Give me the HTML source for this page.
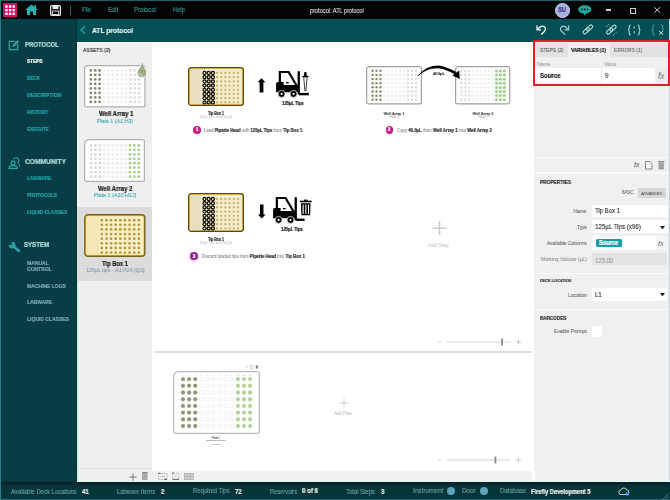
<!DOCTYPE html><html><head><meta charset="utf-8"><style>
html,body{margin:0;padding:0;}
body{width:670px;height:500px;position:relative;overflow:hidden;background:#efefef;font-family:"Liberation Sans",sans-serif;}
.t{position:absolute;white-space:nowrap;line-height:1;will-change:transform;-webkit-text-stroke:0.08px currentColor;}
.t b,.tb{-webkit-text-stroke:0.22px currentColor;}
.t b{color:#333;}
.r{position:absolute;}
svg{position:absolute;overflow:visible;}
</style></head><body>
<div class="r" style="left:0px;top:0px;width:670px;height:19px;background:#030404;"></div>
<div class="r" style="left:0px;top:0px;width:670px;height:1px;background:#1e5e6a;"></div>
<div class="r" style="left:0px;top:19px;width:77px;height:462px;background:#083d45;"></div>
<div class="r" style="left:77px;top:19px;width:593px;height:23px;background:#024f56;"></div>
<div class="r" style="left:77px;top:19px;width:593px;height:1px;background:#03554f;"></div>
<div class="r" style="left:74px;top:19px;width:2px;height:462px;background:#0a3b41;"></div>
<div class="r" style="left:75.5px;top:19px;width:1px;height:462px;background:#05333a;"></div>
<div class="r" style="left:77px;top:42px;width:75px;height:439px;background:#efefef;"></div>
<div class="r" style="left:152px;top:42px;width:382px;height:439px;background:#ffffff;"></div>
<div class="r" style="left:534px;top:42px;width:136px;height:439px;background:#f0f0f0;"></div>
<div class="r" style="left:77px;top:42px;width:593px;height:1px;background:#ffffff;"></div>
<div class="r" style="left:0px;top:481px;width:670px;height:19px;background:#033539;"></div>
<div class="r" style="left:77px;top:481px;width:593px;height:1px;background:#d8fff6;"></div>
<div class="r" style="left:0px;top:482px;width:670px;height:1.5px;background:#06222a;"></div>
<div class="r" style="left:0px;top:483.5px;width:670px;height:2px;background:#0c2c35;"></div>
<div class="r" style="left:0px;top:499px;width:670px;height:1px;background:#2a6b7a;"></div>
<div class="r" style="left:0px;top:0px;width:1px;height:500px;background:#2a7b88;"></div>
<div class="r" style="left:669px;top:19px;width:1px;height:462px;background:#b9d3df;"></div>
<svg style="left:3px;top:3px" width="14" height="14" viewBox="0 0 14 14"><rect x="0" y="0" width="14" height="14" fill="#cf106c"/><rect x="2.3" y="2.3" width="2.4" height="2.4" rx="0.5" fill="#fff"/><rect x="2.3" y="5.9" width="2.4" height="2.4" rx="0.5" fill="#fff"/><rect x="2.3" y="9.5" width="2.4" height="2.4" rx="0.5" fill="#fff"/><rect x="5.9" y="2.3" width="2.4" height="2.4" rx="0.5" fill="#fff"/><rect x="5.9" y="5.9" width="2.4" height="2.4" rx="0.5" fill="#fff"/><rect x="5.9" y="9.5" width="2.4" height="2.4" rx="0.5" fill="#fff"/><rect x="9.5" y="2.3" width="2.4" height="2.4" rx="0.5" fill="#fff"/><rect x="9.5" y="5.9" width="2.4" height="2.4" rx="0.5" fill="#fff"/><rect x="9.5" y="9.5" width="2.4" height="2.4" rx="0.5" fill="#fff"/></svg>
<svg style="left:25px;top:4px" width="13" height="11" viewBox="0 0 13 11"><path d="M6.5 0.5 L13 6 L11 6 L11 11 L8 11 L8 7.5 L5 7.5 L5 11 L2 11 L2 6 L0 6 Z" fill="#23b3b5"/><rect x="9.3" y="1" width="1.6" height="3" fill="#23b3b5"/></svg>
<svg style="left:50px;top:5px" width="11" height="11" viewBox="0 0 11 11"><rect x="0.6" y="0.6" width="9.8" height="9.8" rx="1" fill="none" stroke="#e8e8e8" stroke-width="1.2"/><rect x="2.5" y="0.6" width="6" height="3.5" fill="#e8e8e8"/><rect x="2.3" y="6" width="6.4" height="3.6" fill="none" stroke="#e8e8e8" stroke-width="0.9"/></svg>
<div class="r" style="left:70px;top:6px;width:1px;height:9px;background:#3a5a60;"></div>
<div class="t" style="left:82.00px;top:7.28px;font-size:6.27px;color:#3fa2a2;transform:scaleX(0.8929);transform-origin:left center;">File</div>
<div class="t" style="left:107.60px;top:7.16px;font-size:6.50px;color:#3fa2a2;transform:scaleX(0.8929);transform-origin:left center;">Edit</div>
<div class="t" style="left:134.00px;top:7.04px;font-size:6.72px;color:#3fa2a2;transform:scaleX(0.8929);transform-origin:left center;">Protocol</div>
<div class="t" style="left:173.00px;top:7.16px;font-size:6.50px;color:#3fa2a2;transform:scaleX(0.8929);transform-origin:left center;">Help</div>
<div class="t" style="left:309.50px;top:7.98px;font-size:6.27px;color:#e0e0e0;transform:scaleX(0.8929);transform-origin:left center;">protocol: ATL protocol</div>
<div class="r" style="left:554.7px;top:2.6px;width:13.6px;height:13.6px;border-radius:50%;background:#a9aee0;border:0.5px solid #cfd0f2;"></div>
<div class="t" style="left:361.75px;width:400px;text-align:center;top:7.38px;font-size:6.27px;color:#2c3a78;transform:scaleX(0.8929);transform-origin:center center;font-weight:bold;-webkit-text-stroke:0.22px currentColor;">SU</div>
<svg style="left:578.3px;top:5.3px" width="15" height="12" viewBox="0 0 15 12"><ellipse cx="6.7" cy="4.4" rx="6.6" ry="4.1" fill="#1ea9a0"/><path d="M5.5 7.8 L6.2 10.5 L9 7.8 Z" fill="#1ea9a0"/><circle cx="3.9" cy="4.4" r="0.85" fill="#030607"/><circle cx="6.7" cy="4.4" r="0.85" fill="#030607"/><circle cx="9.5" cy="4.4" r="0.85" fill="#030607"/></svg>
<div class="r" style="left:605.7px;top:9.4px;width:5.8px;height:1.2px;background:#d0d0d0;"></div>
<svg style="left:630px;top:7.5px" width="6" height="6" viewBox="0 0 6 6"><rect x="0.5" y="0.5" width="5" height="5" fill="none" stroke="#cfcfcf" stroke-width="1"/></svg>
<svg style="left:654.2px;top:7.2px" width="6.5" height="6" viewBox="0 0 6.5 6"><path d="M0.3 0.2 L6.2 5.8 M6.2 0.2 L0.3 5.8" stroke="#d0d0d0" stroke-width="1"/></svg>
<svg style="left:80px;top:26px" width="6" height="8" viewBox="0 0 6 8"><path d="M5 0.5 L1 4 L5 7.5" fill="none" stroke="#2aa2a6" stroke-width="1.3"/></svg>
<div class="t" style="left:91.50px;top:26.91px;font-size:7.50px;color:#e8f4f4;transform:scaleX(0.8929);transform-origin:left center;font-weight:bold;-webkit-text-stroke:0.22px currentColor;">ATL protocol</div>
<svg style="left:532px;top:22px" width="40" height="16" viewBox="0 0 40 16"><path d="M5 3.5 V7.8 H9.2" fill="none" stroke="#f4fbfa" stroke-width="1.3"/><path d="M5.8 7.3 Q9 3 12 4.6 Q14.6 6.6 12.5 9.2 L9.2 12.6" fill="none" stroke="#f4fbfa" stroke-width="1.3"/><path d="M36.7 3.6 V7.8 H32.6" fill="none" stroke="#a9d2d0" stroke-width="1.2"/><path d="M36 7.3 Q32.8 3 29.8 4.6 Q27.3 6.6 29.4 9.2 L33.2 12.6" fill="none" stroke="#a9d2d0" stroke-width="1.2"/></svg>
<svg style="left:578px;top:22px" width="44" height="16" viewBox="0 0 44 16"><g transform="translate(9.9 7.4) rotate(-42)"><g transform="translate(-2.2 0)"><rect x="-3.6" y="-1.7" width="7.2" height="3.4" rx="1.7" fill="none" stroke="#b8e0dc" stroke-width="1.1"/></g><g transform="translate(2.2 0)"><rect x="-3.6" y="-1.7" width="7.2" height="3.4" rx="1.7" fill="none" stroke="#b8e0dc" stroke-width="1.1"/></g></g><g transform="translate(33.3 7.6) rotate(-42)"><g transform="translate(-2.2 0)"><rect x="-3.6" y="-1.7" width="7.2" height="3.4" rx="1.7" fill="none" stroke="#b8e0dc" stroke-width="1.1"/></g><g transform="translate(2.2 0)"><rect x="-3.6" y="-1.7" width="7.2" height="3.4" rx="1.7" fill="none" stroke="#b8e0dc" stroke-width="1.1"/></g></g><path d="M29 3.2 L30 4.2 M28 4.8 H29.2 M30.6 2 V3.2 M36 11 L37 12 M37.6 10.2 H38.8 M35.6 12.6 V13.8" stroke="#b8e0dc" stroke-width="0.6"/></svg>
<svg style="left:624px;top:22px" width="46" height="16" viewBox="0 0 46 16"><path d="M6.8 3 Q5.2 3 5.2 4.6 V6.6 Q5.2 7.9 4 8 Q5.2 8.1 5.2 9.4 V11.4 Q5.2 13 6.8 13" fill="none" stroke="#a8d6d0" stroke-width="1.1"/><path d="M13.6 3 Q15.2 3 15.2 4.6 V6.6 Q15.2 7.9 16.4 8 Q15.2 8.1 15.2 9.4 V11.4 Q15.2 13 13.6 13" fill="none" stroke="#a8d6d0" stroke-width="1.1"/><path d="M10.2 4.6 V6.6 M10.2 9.2 V11.4" stroke="#a8d6d0" stroke-width="1.1"/><path d="M30.6 3 Q29 3 29 4.6 V6.6 Q29 7.9 27.8 8 Q29 8.1 29 9.4 V11.4 Q29 13 30.6 13" fill="none" stroke="#4f9692" stroke-width="1.1"/><path d="M37 3 Q38.6 3 38.6 4.6 V6.6 Q38.6 7.9 39.8 8" fill="none" stroke="#4f9692" stroke-width="1.1"/><path d="M35.2 9 L39.2 12.6 M39.2 9 L35.2 12.6" stroke="#cfe6e4" stroke-width="1"/></svg>
<div class="t" style="left:24.60px;top:41.54px;font-size:6.72px;color:#a6e0da;transform:scaleX(0.8929);transform-origin:left center;font-weight:bold;-webkit-text-stroke:0.22px currentColor;">PROTOCOL</div>
<div class="t" style="left:26.80px;top:59.00px;font-size:5.73px;color:#ffffff;transform:scaleX(0.8197);transform-origin:left center;font-weight:bold;-webkit-text-stroke:0.22px currentColor;">STEPS</div>
<div class="t" style="left:26.80px;top:75.76px;font-size:5.61px;color:#1fa4a8;transform:scaleX(0.8197);transform-origin:left center;font-weight:bold;-webkit-text-stroke:0.22px currentColor;">DECK</div>
<div class="t" style="left:26.80px;top:92.40px;font-size:6.10px;color:#1fa4a8;transform:scaleX(0.8197);transform-origin:left center;font-weight:bold;-webkit-text-stroke:0.22px currentColor;">DESCRIPTION</div>
<div class="t" style="left:26.80px;top:109.47px;font-size:5.98px;color:#1fa4a8;transform:scaleX(0.8197);transform-origin:left center;font-weight:bold;-webkit-text-stroke:0.22px currentColor;">HISTORY</div>
<div class="t" style="left:26.80px;top:126.76px;font-size:5.61px;color:#1fa4a8;transform:scaleX(0.8197);transform-origin:left center;font-weight:bold;-webkit-text-stroke:0.22px currentColor;">EXECUTE</div>
<svg style="left:8px;top:39px" width="12" height="12" viewBox="0 0 12 12"><path d="M7.2 2.4 H1.4 V10.6 H9.6 V5.2" fill="none" stroke="#2aa6a0" stroke-width="1.25"/><path d="M4.2 8.1 L5 5.6 L9.6 1.2 L11.2 2.8 L6.7 7.3 Z" fill="#2aa6a0"/></svg>
<div class="t" style="left:24.80px;top:157.84px;font-size:7.45px;color:#a6e0da;transform:scaleX(0.8929);transform-origin:left center;font-weight:bold;-webkit-text-stroke:0.22px currentColor;">COMMUNITY</div>
<div class="t" style="left:27.20px;top:176.33px;font-size:5.86px;color:#1fa4a8;transform:scaleX(0.8197);transform-origin:left center;font-weight:bold;-webkit-text-stroke:0.22px currentColor;">LABWARE</div>
<div class="t" style="left:27.20px;top:193.16px;font-size:5.79px;color:#1fa4a8;transform:scaleX(0.8197);transform-origin:left center;font-weight:bold;-webkit-text-stroke:0.22px currentColor;">PROTOCOLS</div>
<div class="t" style="left:27.20px;top:209.93px;font-size:5.86px;color:#1fa4a8;transform:scaleX(0.8197);transform-origin:left center;font-weight:bold;-webkit-text-stroke:0.22px currentColor;">LIQUID CLASSES</div>
<svg style="left:7.5px;top:156px" width="13" height="13" viewBox="0 0 13 13"><circle cx="5.1" cy="6.9" r="2.1" fill="none" stroke="#2aa6a0" stroke-width="1.15"/><path d="M0.9 12.4 L1.4 10.7 Q2.4 9.6 5.1 9.6 Q7.8 9.6 8.8 10.7 L9.3 12.4 Z" fill="none" stroke="#2aa6a0" stroke-width="1.15" stroke-linejoin="round"/><path d="M5.2 3.2 Q7 1.2 9.2 2 Q11.2 3 10.8 5.4 Q10.5 6.7 9.4 7.2" fill="none" stroke="#2aa6a0" stroke-width="1.1"/><path d="M10.6 7.8 Q11.8 8.8 11.6 10.6" fill="none" stroke="#2aa6a0" stroke-width="1.1"/></svg>
<div class="t" style="left:24.00px;top:241.78px;font-size:6.83px;color:#a6e0da;transform:scaleX(0.8929);transform-origin:left center;font-weight:bold;-webkit-text-stroke:0.22px currentColor;">SYSTEM</div>
<div class="t" style="left:27.00px;top:260.00px;font-size:6.10px;color:#79aab3;transform:scaleX(0.8197);transform-origin:left center;font-weight:bold;-webkit-text-stroke:0.22px currentColor;">MANUAL</div>
<div class="t" style="left:27.00px;top:265.60px;font-size:6.10px;color:#79aab3;transform:scaleX(0.8197);transform-origin:left center;font-weight:bold;-webkit-text-stroke:0.22px currentColor;">CONTROL</div>
<div class="t" style="left:27.00px;top:282.60px;font-size:6.10px;color:#79aab3;transform:scaleX(0.8197);transform-origin:left center;font-weight:bold;-webkit-text-stroke:0.22px currentColor;">MACHINE LOGS</div>
<div class="t" style="left:27.00px;top:299.20px;font-size:6.10px;color:#79aab3;transform:scaleX(0.8197);transform-origin:left center;font-weight:bold;-webkit-text-stroke:0.22px currentColor;">LABWARE</div>
<div class="t" style="left:27.00px;top:316.00px;font-size:6.10px;color:#79aab3;transform:scaleX(0.8197);transform-origin:left center;font-weight:bold;-webkit-text-stroke:0.22px currentColor;">LIQUID CLASSES</div>
<svg style="left:7px;top:240px" width="14" height="13" viewBox="0 0 14 13"><path d="M4.81 2.81 A2.4 2.4 0 1 1 2.81 4.81" fill="none" stroke="#2aa6aa" stroke-width="2"/><path d="M5.3 5.3 L12 11" stroke="#2aa6aa" stroke-width="2.3" stroke-linecap="round"/></svg>
<div class="r" style="left:77px;top:42px;width:1px;height:439px;background:#f4fffd;"></div>
<div class="r" style="left:77px;top:255px;width:1px;height:226px;background:#b8f0e2;"></div>
<div class="t" style="left:83.20px;top:48.15px;font-size:5.60px;color:#333333;transform:scaleX(0.8929);transform-origin:left center;-webkit-text-stroke:0.18px #333;">ASSETS (<i>3</i>)</div>
<svg style="left:84px;top:65px" width="62" height="43" viewBox="0 0 62 43"><path d="M4.1 0.6 L58.9 0.6 Q60.9 0.6 60.9 2.6 L60.9 39.9 Q60.9 41.9 58.9 41.9 L2.6 41.9 Q0.6 41.9 0.6 39.9 L0.6 4.1 Q0.6 0.6 4.1 0.6 Z" fill="#fff" stroke="#b0b0b0" stroke-width="1.2"/><circle cx="6.80" cy="5.40" r="1.4" fill="#818c72"/><circle cx="6.80" cy="9.90" r="1.4" fill="#818c72"/><circle cx="6.80" cy="14.40" r="1.4" fill="#818c72"/><circle cx="6.80" cy="18.90" r="1.4" fill="#818c72"/><circle cx="6.80" cy="23.40" r="1.4" fill="#818c72"/><circle cx="6.80" cy="27.90" r="1.4" fill="#818c72"/><circle cx="6.80" cy="32.40" r="1.4" fill="#818c72"/><circle cx="6.80" cy="36.90" r="1.4" fill="#818c72"/><circle cx="11.20" cy="5.40" r="1.4" fill="#818c72"/><circle cx="11.20" cy="9.90" r="1.4" fill="#818c72"/><circle cx="11.20" cy="14.40" r="1.4" fill="#818c72"/><circle cx="11.20" cy="18.90" r="1.4" fill="#818c72"/><circle cx="11.20" cy="23.40" r="1.4" fill="#818c72"/><circle cx="11.20" cy="27.90" r="1.4" fill="#818c72"/><circle cx="11.20" cy="32.40" r="1.4" fill="#818c72"/><circle cx="11.20" cy="36.90" r="1.4" fill="#818c72"/><circle cx="15.60" cy="5.40" r="1.4" fill="#818c72"/><circle cx="15.60" cy="9.90" r="1.4" fill="#818c72"/><circle cx="15.60" cy="14.40" r="1.4" fill="#818c72"/><circle cx="15.60" cy="18.90" r="1.4" fill="#818c72"/><circle cx="15.60" cy="23.40" r="1.4" fill="#818c72"/><circle cx="15.60" cy="27.90" r="1.4" fill="#818c72"/><circle cx="15.60" cy="32.40" r="1.4" fill="#818c72"/><circle cx="15.60" cy="36.90" r="1.4" fill="#818c72"/><circle cx="20.00" cy="5.40" r="1.4" fill="#efefef"/><circle cx="20.00" cy="9.90" r="1.4" fill="#efefef"/><circle cx="20.00" cy="14.40" r="1.4" fill="#efefef"/><circle cx="20.00" cy="18.90" r="1.4" fill="#efefef"/><circle cx="20.00" cy="23.40" r="1.4" fill="#efefef"/><circle cx="20.00" cy="27.90" r="1.4" fill="#efefef"/><circle cx="20.00" cy="32.40" r="1.4" fill="#efefef"/><circle cx="20.00" cy="36.90" r="1.4" fill="#efefef"/><circle cx="24.40" cy="5.40" r="1.4" fill="#efefef"/><circle cx="24.40" cy="9.90" r="1.4" fill="#efefef"/><circle cx="24.40" cy="14.40" r="1.4" fill="#efefef"/><circle cx="24.40" cy="18.90" r="1.4" fill="#efefef"/><circle cx="24.40" cy="23.40" r="1.4" fill="#efefef"/><circle cx="24.40" cy="27.90" r="1.4" fill="#efefef"/><circle cx="24.40" cy="32.40" r="1.4" fill="#efefef"/><circle cx="24.40" cy="36.90" r="1.4" fill="#efefef"/><circle cx="28.80" cy="5.40" r="1.4" fill="#efefef"/><circle cx="28.80" cy="9.90" r="1.4" fill="#efefef"/><circle cx="28.80" cy="14.40" r="1.4" fill="#efefef"/><circle cx="28.80" cy="18.90" r="1.4" fill="#efefef"/><circle cx="28.80" cy="23.40" r="1.4" fill="#efefef"/><circle cx="28.80" cy="27.90" r="1.4" fill="#efefef"/><circle cx="28.80" cy="32.40" r="1.4" fill="#efefef"/><circle cx="28.80" cy="36.90" r="1.4" fill="#efefef"/><circle cx="33.20" cy="5.40" r="1.4" fill="#efefef"/><circle cx="33.20" cy="9.90" r="1.4" fill="#efefef"/><circle cx="33.20" cy="14.40" r="1.4" fill="#efefef"/><circle cx="33.20" cy="18.90" r="1.4" fill="#efefef"/><circle cx="33.20" cy="23.40" r="1.4" fill="#efefef"/><circle cx="33.20" cy="27.90" r="1.4" fill="#efefef"/><circle cx="33.20" cy="32.40" r="1.4" fill="#efefef"/><circle cx="33.20" cy="36.90" r="1.4" fill="#efefef"/><circle cx="37.60" cy="5.40" r="1.4" fill="#efefef"/><circle cx="37.60" cy="9.90" r="1.4" fill="#efefef"/><circle cx="37.60" cy="14.40" r="1.4" fill="#efefef"/><circle cx="37.60" cy="18.90" r="1.4" fill="#efefef"/><circle cx="37.60" cy="23.40" r="1.4" fill="#efefef"/><circle cx="37.60" cy="27.90" r="1.4" fill="#efefef"/><circle cx="37.60" cy="32.40" r="1.4" fill="#efefef"/><circle cx="37.60" cy="36.90" r="1.4" fill="#efefef"/><circle cx="42.00" cy="5.40" r="1.4" fill="#efefef"/><circle cx="42.00" cy="9.90" r="1.4" fill="#efefef"/><circle cx="42.00" cy="14.40" r="1.4" fill="#efefef"/><circle cx="42.00" cy="18.90" r="1.4" fill="#efefef"/><circle cx="42.00" cy="23.40" r="1.4" fill="#efefef"/><circle cx="42.00" cy="27.90" r="1.4" fill="#efefef"/><circle cx="42.00" cy="32.40" r="1.4" fill="#efefef"/><circle cx="42.00" cy="36.90" r="1.4" fill="#efefef"/><circle cx="46.40" cy="5.40" r="1.4" fill="#dedede"/><circle cx="46.40" cy="9.90" r="1.4" fill="#dedede"/><circle cx="46.40" cy="14.40" r="1.4" fill="#dedede"/><circle cx="46.40" cy="18.90" r="1.4" fill="#dedede"/><circle cx="46.40" cy="23.40" r="1.4" fill="#dedede"/><circle cx="46.40" cy="27.90" r="1.4" fill="#dedede"/><circle cx="46.40" cy="32.40" r="1.4" fill="#dedede"/><circle cx="46.40" cy="36.90" r="1.4" fill="#dedede"/><circle cx="50.80" cy="5.40" r="1.4" fill="#dedede"/><circle cx="50.80" cy="9.90" r="1.4" fill="#dedede"/><circle cx="50.80" cy="14.40" r="1.4" fill="#dedede"/><circle cx="50.80" cy="18.90" r="1.4" fill="#dedede"/><circle cx="50.80" cy="23.40" r="1.4" fill="#dedede"/><circle cx="50.80" cy="27.90" r="1.4" fill="#dedede"/><circle cx="50.80" cy="32.40" r="1.4" fill="#dedede"/><circle cx="50.80" cy="36.90" r="1.4" fill="#dedede"/><circle cx="55.20" cy="5.40" r="1.4" fill="#dedede"/><circle cx="55.20" cy="9.90" r="1.4" fill="#dedede"/><circle cx="55.20" cy="14.40" r="1.4" fill="#dedede"/><circle cx="55.20" cy="18.90" r="1.4" fill="#dedede"/><circle cx="55.20" cy="23.40" r="1.4" fill="#dedede"/><circle cx="55.20" cy="27.90" r="1.4" fill="#dedede"/><circle cx="55.20" cy="32.40" r="1.4" fill="#dedede"/><circle cx="55.20" cy="36.90" r="1.4" fill="#dedede"/></svg>
<svg style="left:135.5px;top:60.8px" width="13" height="18" viewBox="0 0 13 18"><path d="M6 1.2 Q6.6 4.2 10.2 9.6 A4.75 4.75 0 1 1 1.8 9.6 Q5.4 4.2 6 1.2 Z" fill="#9bab84" stroke="#fbfbf6" stroke-width="1"/><path d="M6 1.6 Q6.4 3.6 7.6 5.6" fill="none" stroke="#6f7c66" stroke-width="0.7"/><path d="M3.4 12.2 Q4.4 14.2 6.8 14.3" fill="none" stroke="#eef3e6" stroke-width="0.8"/></svg>
<div class="t" style="left:98.50px;top:111.24px;font-size:6.72px;color:#1e1e1e;transform:scaleX(0.8929);transform-origin:left center;font-weight:bold;-webkit-text-stroke:0.22px currentColor;">Well Array 1</div>
<div class="t" style="left:97.30px;top:118.69px;font-size:5.90px;color:#30a5ad;transform:scaleX(0.8929);transform-origin:left center;">Plate 1 (<i>A1:H3</i>)</div>
<svg style="left:84px;top:138.5px" width="61" height="43.5" viewBox="0 0 61 43.5"><path d="M5.6 0.6 L58.4 0.6 Q60.4 0.6 60.4 2.6 L60.4 40.4 Q60.4 42.4 58.4 42.4 L2.6 42.4 Q0.6 42.4 0.6 40.4 L0.6 5.6 Q0.6 0.6 5.6 0.6 Z" fill="#fff" stroke="#b0b0b0" stroke-width="1.2"/><circle cx="7.20" cy="6.40" r="1.4" fill="#d9d9d9"/><circle cx="7.20" cy="10.86" r="1.4" fill="#d9d9d9"/><circle cx="7.20" cy="15.32" r="1.4" fill="#d9d9d9"/><circle cx="7.20" cy="19.78" r="1.4" fill="#d9d9d9"/><circle cx="7.20" cy="24.24" r="1.4" fill="#d9d9d9"/><circle cx="7.20" cy="28.70" r="1.4" fill="#d9d9d9"/><circle cx="7.20" cy="33.16" r="1.4" fill="#d9d9d9"/><circle cx="7.20" cy="37.62" r="1.4" fill="#d9d9d9"/><circle cx="11.52" cy="6.40" r="1.4" fill="#d9d9d9"/><circle cx="11.52" cy="10.86" r="1.4" fill="#d9d9d9"/><circle cx="11.52" cy="15.32" r="1.4" fill="#d9d9d9"/><circle cx="11.52" cy="19.78" r="1.4" fill="#d9d9d9"/><circle cx="11.52" cy="24.24" r="1.4" fill="#d9d9d9"/><circle cx="11.52" cy="28.70" r="1.4" fill="#d9d9d9"/><circle cx="11.52" cy="33.16" r="1.4" fill="#d9d9d9"/><circle cx="11.52" cy="37.62" r="1.4" fill="#d9d9d9"/><circle cx="15.84" cy="6.40" r="1.4" fill="#d9d9d9"/><circle cx="15.84" cy="10.86" r="1.4" fill="#d9d9d9"/><circle cx="15.84" cy="15.32" r="1.4" fill="#d9d9d9"/><circle cx="15.84" cy="19.78" r="1.4" fill="#d9d9d9"/><circle cx="15.84" cy="24.24" r="1.4" fill="#d9d9d9"/><circle cx="15.84" cy="28.70" r="1.4" fill="#d9d9d9"/><circle cx="15.84" cy="33.16" r="1.4" fill="#d9d9d9"/><circle cx="15.84" cy="37.62" r="1.4" fill="#d9d9d9"/><circle cx="20.16" cy="6.40" r="1.4" fill="#ececec"/><circle cx="20.16" cy="10.86" r="1.4" fill="#ececec"/><circle cx="20.16" cy="15.32" r="1.4" fill="#ececec"/><circle cx="20.16" cy="19.78" r="1.4" fill="#ececec"/><circle cx="20.16" cy="24.24" r="1.4" fill="#ececec"/><circle cx="20.16" cy="28.70" r="1.4" fill="#ececec"/><circle cx="20.16" cy="33.16" r="1.4" fill="#ececec"/><circle cx="20.16" cy="37.62" r="1.4" fill="#ececec"/><circle cx="24.48" cy="6.40" r="1.4" fill="#ececec"/><circle cx="24.48" cy="10.86" r="1.4" fill="#ececec"/><circle cx="24.48" cy="15.32" r="1.4" fill="#ececec"/><circle cx="24.48" cy="19.78" r="1.4" fill="#ececec"/><circle cx="24.48" cy="24.24" r="1.4" fill="#ececec"/><circle cx="24.48" cy="28.70" r="1.4" fill="#ececec"/><circle cx="24.48" cy="33.16" r="1.4" fill="#ececec"/><circle cx="24.48" cy="37.62" r="1.4" fill="#ececec"/><circle cx="28.80" cy="6.40" r="1.4" fill="#ececec"/><circle cx="28.80" cy="10.86" r="1.4" fill="#ececec"/><circle cx="28.80" cy="15.32" r="1.4" fill="#ececec"/><circle cx="28.80" cy="19.78" r="1.4" fill="#ececec"/><circle cx="28.80" cy="24.24" r="1.4" fill="#ececec"/><circle cx="28.80" cy="28.70" r="1.4" fill="#ececec"/><circle cx="28.80" cy="33.16" r="1.4" fill="#ececec"/><circle cx="28.80" cy="37.62" r="1.4" fill="#ececec"/><circle cx="33.12" cy="6.40" r="1.4" fill="#ececec"/><circle cx="33.12" cy="10.86" r="1.4" fill="#ececec"/><circle cx="33.12" cy="15.32" r="1.4" fill="#ececec"/><circle cx="33.12" cy="19.78" r="1.4" fill="#ececec"/><circle cx="33.12" cy="24.24" r="1.4" fill="#ececec"/><circle cx="33.12" cy="28.70" r="1.4" fill="#ececec"/><circle cx="33.12" cy="33.16" r="1.4" fill="#ececec"/><circle cx="33.12" cy="37.62" r="1.4" fill="#ececec"/><circle cx="37.44" cy="6.40" r="1.4" fill="#ececec"/><circle cx="37.44" cy="10.86" r="1.4" fill="#ececec"/><circle cx="37.44" cy="15.32" r="1.4" fill="#ececec"/><circle cx="37.44" cy="19.78" r="1.4" fill="#ececec"/><circle cx="37.44" cy="24.24" r="1.4" fill="#ececec"/><circle cx="37.44" cy="28.70" r="1.4" fill="#ececec"/><circle cx="37.44" cy="33.16" r="1.4" fill="#ececec"/><circle cx="37.44" cy="37.62" r="1.4" fill="#ececec"/><circle cx="41.76" cy="6.40" r="1.4" fill="#ececec"/><circle cx="41.76" cy="10.86" r="1.4" fill="#ececec"/><circle cx="41.76" cy="15.32" r="1.4" fill="#ececec"/><circle cx="41.76" cy="19.78" r="1.4" fill="#ececec"/><circle cx="41.76" cy="24.24" r="1.4" fill="#ececec"/><circle cx="41.76" cy="28.70" r="1.4" fill="#ececec"/><circle cx="41.76" cy="33.16" r="1.4" fill="#ececec"/><circle cx="41.76" cy="37.62" r="1.4" fill="#ececec"/><circle cx="46.08" cy="6.40" r="1.4" fill="#a7cf8a"/><circle cx="46.08" cy="10.86" r="1.4" fill="#a7cf8a"/><circle cx="46.08" cy="15.32" r="1.4" fill="#a7cf8a"/><circle cx="46.08" cy="19.78" r="1.4" fill="#a7cf8a"/><circle cx="46.08" cy="24.24" r="1.4" fill="#a7cf8a"/><circle cx="46.08" cy="28.70" r="1.4" fill="#a7cf8a"/><circle cx="46.08" cy="33.16" r="1.4" fill="#a7cf8a"/><circle cx="46.08" cy="37.62" r="1.4" fill="#a7cf8a"/><circle cx="50.40" cy="6.40" r="1.4" fill="#a7cf8a"/><circle cx="50.40" cy="10.86" r="1.4" fill="#a7cf8a"/><circle cx="50.40" cy="15.32" r="1.4" fill="#a7cf8a"/><circle cx="50.40" cy="19.78" r="1.4" fill="#a7cf8a"/><circle cx="50.40" cy="24.24" r="1.4" fill="#a7cf8a"/><circle cx="50.40" cy="28.70" r="1.4" fill="#a7cf8a"/><circle cx="50.40" cy="33.16" r="1.4" fill="#a7cf8a"/><circle cx="50.40" cy="37.62" r="1.4" fill="#a7cf8a"/><circle cx="54.72" cy="6.40" r="1.4" fill="#a7cf8a"/><circle cx="54.72" cy="10.86" r="1.4" fill="#a7cf8a"/><circle cx="54.72" cy="15.32" r="1.4" fill="#a7cf8a"/><circle cx="54.72" cy="19.78" r="1.4" fill="#a7cf8a"/><circle cx="54.72" cy="24.24" r="1.4" fill="#a7cf8a"/><circle cx="54.72" cy="28.70" r="1.4" fill="#a7cf8a"/><circle cx="54.72" cy="33.16" r="1.4" fill="#a7cf8a"/><circle cx="54.72" cy="37.62" r="1.4" fill="#a7cf8a"/></svg>
<div class="t" style="left:97.60px;top:185.94px;font-size:6.72px;color:#1e1e1e;transform:scaleX(0.8929);transform-origin:left center;font-weight:bold;-webkit-text-stroke:0.22px currentColor;">Well Array 2</div>
<div class="t" style="left:93.60px;top:193.35px;font-size:5.97px;color:#30a5ad;transform:scaleX(0.8929);transform-origin:left center;">Plate 1 (<i>A10:H12</i>)</div>
<div class="r" style="left:77px;top:206.5px;width:75px;height:74px;background:#dcdcdc;"></div>
<svg style="left:84px;top:214px" width="62" height="43" viewBox="0 0 62 43"><rect x="0.8" y="0.8" width="60" height="41.5" rx="3" fill="#f4c955" stroke="#76661c" stroke-width="1.4"/><rect x="2.3" y="2.3" width="57" height="38.5" rx="1.5" fill="#fbf0c4"/><path d="M3.0 3 V40" stroke="#f1dfa6" stroke-width="0.4"/><path d="M4.5 3 V40" stroke="#f1dfa6" stroke-width="0.4"/><path d="M6.0 3 V40" stroke="#f1dfa6" stroke-width="0.4"/><path d="M7.5 3 V40" stroke="#f1dfa6" stroke-width="0.4"/><path d="M9.0 3 V40" stroke="#f1dfa6" stroke-width="0.4"/><path d="M10.5 3 V40" stroke="#f1dfa6" stroke-width="0.4"/><path d="M12.0 3 V40" stroke="#f1dfa6" stroke-width="0.4"/><path d="M13.5 3 V40" stroke="#f1dfa6" stroke-width="0.4"/><path d="M15.0 3 V40" stroke="#f1dfa6" stroke-width="0.4"/><path d="M3 3.0 H15" stroke="#f1dfa6" stroke-width="0.4"/><path d="M3 4.5 H15" stroke="#f1dfa6" stroke-width="0.4"/><path d="M3 6.0 H15" stroke="#f1dfa6" stroke-width="0.4"/><path d="M3 7.5 H15" stroke="#f1dfa6" stroke-width="0.4"/><path d="M3 9.0 H15" stroke="#f1dfa6" stroke-width="0.4"/><path d="M3 10.5 H15" stroke="#f1dfa6" stroke-width="0.4"/><path d="M3 12.0 H15" stroke="#f1dfa6" stroke-width="0.4"/><path d="M3 13.5 H15" stroke="#f1dfa6" stroke-width="0.4"/><path d="M3 15.0 H15" stroke="#f1dfa6" stroke-width="0.4"/><path d="M3 16.5 H15" stroke="#f1dfa6" stroke-width="0.4"/><path d="M3 18.0 H15" stroke="#f1dfa6" stroke-width="0.4"/><path d="M3 19.5 H15" stroke="#f1dfa6" stroke-width="0.4"/><path d="M3 21.0 H15" stroke="#f1dfa6" stroke-width="0.4"/><path d="M3 22.5 H15" stroke="#f1dfa6" stroke-width="0.4"/><path d="M3 24.0 H15" stroke="#f1dfa6" stroke-width="0.4"/><path d="M3 25.5 H15" stroke="#f1dfa6" stroke-width="0.4"/><path d="M3 27.0 H15" stroke="#f1dfa6" stroke-width="0.4"/><path d="M3 28.5 H15" stroke="#f1dfa6" stroke-width="0.4"/><path d="M3 30.0 H15" stroke="#f1dfa6" stroke-width="0.4"/><path d="M3 31.5 H15" stroke="#f1dfa6" stroke-width="0.4"/><path d="M3 33.0 H15" stroke="#f1dfa6" stroke-width="0.4"/><path d="M3 34.5 H15" stroke="#f1dfa6" stroke-width="0.4"/><path d="M3 36.0 H15" stroke="#f1dfa6" stroke-width="0.4"/><path d="M3 37.5 H15" stroke="#f1dfa6" stroke-width="0.4"/><path d="M3 39.0 H15" stroke="#f1dfa6" stroke-width="0.4"/><path d="M3 40.5 H15" stroke="#f1dfa6" stroke-width="0.4"/><circle cx="17.80" cy="6.20" r="1.4" fill="#b69a4a"/><circle cx="17.80" cy="10.83" r="1.4" fill="#b69a4a"/><circle cx="17.80" cy="15.46" r="1.4" fill="#b69a4a"/><circle cx="17.80" cy="20.09" r="1.4" fill="#b69a4a"/><circle cx="17.80" cy="24.72" r="1.4" fill="#b69a4a"/><circle cx="17.80" cy="29.35" r="1.4" fill="#b69a4a"/><circle cx="17.80" cy="33.98" r="1.4" fill="#b69a4a"/><circle cx="17.80" cy="38.61" r="1.4" fill="#b69a4a"/><circle cx="22.43" cy="6.20" r="1.4" fill="#b69a4a"/><circle cx="22.43" cy="10.83" r="1.4" fill="#b69a4a"/><circle cx="22.43" cy="15.46" r="1.4" fill="#b69a4a"/><circle cx="22.43" cy="20.09" r="1.4" fill="#b69a4a"/><circle cx="22.43" cy="24.72" r="1.4" fill="#b69a4a"/><circle cx="22.43" cy="29.35" r="1.4" fill="#b69a4a"/><circle cx="22.43" cy="33.98" r="1.4" fill="#b69a4a"/><circle cx="22.43" cy="38.61" r="1.4" fill="#b69a4a"/><circle cx="27.06" cy="6.20" r="1.4" fill="#b69a4a"/><circle cx="27.06" cy="10.83" r="1.4" fill="#b69a4a"/><circle cx="27.06" cy="15.46" r="1.4" fill="#b69a4a"/><circle cx="27.06" cy="20.09" r="1.4" fill="#b69a4a"/><circle cx="27.06" cy="24.72" r="1.4" fill="#b69a4a"/><circle cx="27.06" cy="29.35" r="1.4" fill="#b69a4a"/><circle cx="27.06" cy="33.98" r="1.4" fill="#b69a4a"/><circle cx="27.06" cy="38.61" r="1.4" fill="#b69a4a"/><circle cx="31.69" cy="6.20" r="1.4" fill="#b69a4a"/><circle cx="31.69" cy="10.83" r="1.4" fill="#b69a4a"/><circle cx="31.69" cy="15.46" r="1.4" fill="#b69a4a"/><circle cx="31.69" cy="20.09" r="1.4" fill="#b69a4a"/><circle cx="31.69" cy="24.72" r="1.4" fill="#b69a4a"/><circle cx="31.69" cy="29.35" r="1.4" fill="#b69a4a"/><circle cx="31.69" cy="33.98" r="1.4" fill="#b69a4a"/><circle cx="31.69" cy="38.61" r="1.4" fill="#b69a4a"/><circle cx="36.32" cy="6.20" r="1.4" fill="#b69a4a"/><circle cx="36.32" cy="10.83" r="1.4" fill="#b69a4a"/><circle cx="36.32" cy="15.46" r="1.4" fill="#b69a4a"/><circle cx="36.32" cy="20.09" r="1.4" fill="#b69a4a"/><circle cx="36.32" cy="24.72" r="1.4" fill="#b69a4a"/><circle cx="36.32" cy="29.35" r="1.4" fill="#b69a4a"/><circle cx="36.32" cy="33.98" r="1.4" fill="#b69a4a"/><circle cx="36.32" cy="38.61" r="1.4" fill="#b69a4a"/><circle cx="40.95" cy="6.20" r="1.4" fill="#b69a4a"/><circle cx="40.95" cy="10.83" r="1.4" fill="#b69a4a"/><circle cx="40.95" cy="15.46" r="1.4" fill="#b69a4a"/><circle cx="40.95" cy="20.09" r="1.4" fill="#b69a4a"/><circle cx="40.95" cy="24.72" r="1.4" fill="#b69a4a"/><circle cx="40.95" cy="29.35" r="1.4" fill="#b69a4a"/><circle cx="40.95" cy="33.98" r="1.4" fill="#b69a4a"/><circle cx="40.95" cy="38.61" r="1.4" fill="#b69a4a"/><circle cx="45.58" cy="6.20" r="1.4" fill="#b69a4a"/><circle cx="45.58" cy="10.83" r="1.4" fill="#b69a4a"/><circle cx="45.58" cy="15.46" r="1.4" fill="#b69a4a"/><circle cx="45.58" cy="20.09" r="1.4" fill="#b69a4a"/><circle cx="45.58" cy="24.72" r="1.4" fill="#b69a4a"/><circle cx="45.58" cy="29.35" r="1.4" fill="#b69a4a"/><circle cx="45.58" cy="33.98" r="1.4" fill="#b69a4a"/><circle cx="45.58" cy="38.61" r="1.4" fill="#b69a4a"/><circle cx="50.21" cy="6.20" r="1.4" fill="#b69a4a"/><circle cx="50.21" cy="10.83" r="1.4" fill="#b69a4a"/><circle cx="50.21" cy="15.46" r="1.4" fill="#b69a4a"/><circle cx="50.21" cy="20.09" r="1.4" fill="#b69a4a"/><circle cx="50.21" cy="24.72" r="1.4" fill="#b69a4a"/><circle cx="50.21" cy="29.35" r="1.4" fill="#b69a4a"/><circle cx="50.21" cy="33.98" r="1.4" fill="#b69a4a"/><circle cx="50.21" cy="38.61" r="1.4" fill="#b69a4a"/><circle cx="54.84" cy="6.20" r="1.4" fill="#b69a4a"/><circle cx="54.84" cy="10.83" r="1.4" fill="#b69a4a"/><circle cx="54.84" cy="15.46" r="1.4" fill="#b69a4a"/><circle cx="54.84" cy="20.09" r="1.4" fill="#b69a4a"/><circle cx="54.84" cy="24.72" r="1.4" fill="#b69a4a"/><circle cx="54.84" cy="29.35" r="1.4" fill="#b69a4a"/><circle cx="54.84" cy="33.98" r="1.4" fill="#b69a4a"/><circle cx="54.84" cy="38.61" r="1.4" fill="#b69a4a"/></svg>
<div class="t" style="left:102.00px;top:261.16px;font-size:6.50px;color:#1e1e1e;transform:scaleX(0.8929);transform-origin:left center;font-weight:bold;-webkit-text-stroke:0.22px currentColor;">Tip Box 1</div>
<div class="t" style="left:86.00px;top:268.25px;font-size:5.96px;color:#8593a8;transform:scaleX(0.8929);transform-origin:left center;">125µL tips - <i>A1:P24 (Q3)</i></div>
<div class="r" style="left:77px;top:468px;width:75px;height:1px;background:#e2e2e2;"></div>
<svg style="left:129px;top:472.5px" width="8" height="8" viewBox="0 0 8 8"><path d="M4 0.3 V7.7 M0.3 4 H7.7" stroke="#707070" stroke-width="0.9"/></svg>
<svg style="left:142.3px;top:472px" width="5.5" height="8" viewBox="0 0 5.5 8"><rect x="0" y="0" width="5.5" height="8" fill="#a8a8a8"/><rect x="0" y="0" width="5.5" height="1" fill="#8a8a8a"/></svg>
<svg style="left:188px;top:66.5px" width="56" height="39" viewBox="0 0 56 39"><rect x="0.65" y="0.65" width="54.7" height="37.7" rx="2.6" fill="#f5cf5a" stroke="#5a4812" stroke-width="1.3"/><rect x="2" y="2" width="52" height="35" rx="1.2" fill="#f4ecca"/><rect x="2" y="2" width="11" height="35" fill="#e7dfbf"/><circle cx="29.00" cy="6.00" r="1.15" fill="#c9b173"/><circle cx="29.00" cy="10.20" r="1.15" fill="#c9b173"/><circle cx="29.00" cy="14.40" r="1.15" fill="#c9b173"/><circle cx="29.00" cy="18.60" r="1.15" fill="#c9b173"/><circle cx="29.00" cy="22.80" r="1.15" fill="#c9b173"/><circle cx="29.00" cy="27.00" r="1.15" fill="#c9b173"/><circle cx="29.00" cy="31.20" r="1.15" fill="#c9b173"/><circle cx="29.00" cy="35.40" r="1.15" fill="#c9b173"/><circle cx="33.20" cy="6.00" r="1.15" fill="#c9b173"/><circle cx="33.20" cy="10.20" r="1.15" fill="#c9b173"/><circle cx="33.20" cy="14.40" r="1.15" fill="#c9b173"/><circle cx="33.20" cy="18.60" r="1.15" fill="#c9b173"/><circle cx="33.20" cy="22.80" r="1.15" fill="#c9b173"/><circle cx="33.20" cy="27.00" r="1.15" fill="#c9b173"/><circle cx="33.20" cy="31.20" r="1.15" fill="#c9b173"/><circle cx="33.20" cy="35.40" r="1.15" fill="#c9b173"/><circle cx="37.40" cy="6.00" r="1.15" fill="#c9b173"/><circle cx="37.40" cy="10.20" r="1.15" fill="#c9b173"/><circle cx="37.40" cy="14.40" r="1.15" fill="#c9b173"/><circle cx="37.40" cy="18.60" r="1.15" fill="#c9b173"/><circle cx="37.40" cy="22.80" r="1.15" fill="#c9b173"/><circle cx="37.40" cy="27.00" r="1.15" fill="#c9b173"/><circle cx="37.40" cy="31.20" r="1.15" fill="#c9b173"/><circle cx="37.40" cy="35.40" r="1.15" fill="#c9b173"/><circle cx="41.60" cy="6.00" r="1.15" fill="#c9b173"/><circle cx="41.60" cy="10.20" r="1.15" fill="#c9b173"/><circle cx="41.60" cy="14.40" r="1.15" fill="#c9b173"/><circle cx="41.60" cy="18.60" r="1.15" fill="#c9b173"/><circle cx="41.60" cy="22.80" r="1.15" fill="#c9b173"/><circle cx="41.60" cy="27.00" r="1.15" fill="#c9b173"/><circle cx="41.60" cy="31.20" r="1.15" fill="#c9b173"/><circle cx="41.60" cy="35.40" r="1.15" fill="#c9b173"/><circle cx="45.80" cy="6.00" r="1.15" fill="#c9b173"/><circle cx="45.80" cy="10.20" r="1.15" fill="#c9b173"/><circle cx="45.80" cy="14.40" r="1.15" fill="#c9b173"/><circle cx="45.80" cy="18.60" r="1.15" fill="#c9b173"/><circle cx="45.80" cy="22.80" r="1.15" fill="#c9b173"/><circle cx="45.80" cy="27.00" r="1.15" fill="#c9b173"/><circle cx="45.80" cy="31.20" r="1.15" fill="#c9b173"/><circle cx="45.80" cy="35.40" r="1.15" fill="#c9b173"/><circle cx="50.00" cy="6.00" r="1.15" fill="#c9b173"/><circle cx="50.00" cy="10.20" r="1.15" fill="#c9b173"/><circle cx="50.00" cy="14.40" r="1.15" fill="#c9b173"/><circle cx="50.00" cy="18.60" r="1.15" fill="#c9b173"/><circle cx="50.00" cy="22.80" r="1.15" fill="#c9b173"/><circle cx="50.00" cy="27.00" r="1.15" fill="#c9b173"/><circle cx="50.00" cy="31.20" r="1.15" fill="#c9b173"/><circle cx="50.00" cy="35.40" r="1.15" fill="#c9b173"/><circle cx="16.50" cy="6.00" r="1.55" fill="#f4e2a2" stroke="#000" stroke-width="1.2"/><circle cx="16.50" cy="10.20" r="1.55" fill="#f4e2a2" stroke="#000" stroke-width="1.2"/><circle cx="16.50" cy="14.40" r="1.55" fill="#f4e2a2" stroke="#000" stroke-width="1.2"/><circle cx="16.50" cy="18.60" r="1.55" fill="#f4e2a2" stroke="#000" stroke-width="1.2"/><circle cx="16.50" cy="22.80" r="1.55" fill="#f4e2a2" stroke="#000" stroke-width="1.2"/><circle cx="16.50" cy="27.00" r="1.55" fill="#f4e2a2" stroke="#000" stroke-width="1.2"/><circle cx="16.50" cy="31.20" r="1.55" fill="#f4e2a2" stroke="#000" stroke-width="1.2"/><circle cx="16.50" cy="35.40" r="1.55" fill="#f4e2a2" stroke="#000" stroke-width="1.2"/><circle cx="20.70" cy="6.00" r="1.55" fill="#f4e2a2" stroke="#000" stroke-width="1.2"/><circle cx="20.70" cy="10.20" r="1.55" fill="#f4e2a2" stroke="#000" stroke-width="1.2"/><circle cx="20.70" cy="14.40" r="1.55" fill="#f4e2a2" stroke="#000" stroke-width="1.2"/><circle cx="20.70" cy="18.60" r="1.55" fill="#f4e2a2" stroke="#000" stroke-width="1.2"/><circle cx="20.70" cy="22.80" r="1.55" fill="#f4e2a2" stroke="#000" stroke-width="1.2"/><circle cx="20.70" cy="27.00" r="1.55" fill="#f4e2a2" stroke="#000" stroke-width="1.2"/><circle cx="20.70" cy="31.20" r="1.55" fill="#f4e2a2" stroke="#000" stroke-width="1.2"/><circle cx="20.70" cy="35.40" r="1.55" fill="#f4e2a2" stroke="#000" stroke-width="1.2"/><circle cx="24.90" cy="6.00" r="1.55" fill="#f4e2a2" stroke="#000" stroke-width="1.2"/><circle cx="24.90" cy="10.20" r="1.55" fill="#f4e2a2" stroke="#000" stroke-width="1.2"/><circle cx="24.90" cy="14.40" r="1.55" fill="#f4e2a2" stroke="#000" stroke-width="1.2"/><circle cx="24.90" cy="18.60" r="1.55" fill="#f4e2a2" stroke="#000" stroke-width="1.2"/><circle cx="24.90" cy="22.80" r="1.55" fill="#f4e2a2" stroke="#000" stroke-width="1.2"/><circle cx="24.90" cy="27.00" r="1.55" fill="#f4e2a2" stroke="#000" stroke-width="1.2"/><circle cx="24.90" cy="31.20" r="1.55" fill="#f4e2a2" stroke="#000" stroke-width="1.2"/><circle cx="24.90" cy="35.40" r="1.55" fill="#f4e2a2" stroke="#000" stroke-width="1.2"/></svg>
<svg style="left:257px;top:77.5px" width="9" height="15" viewBox="0 0 9 15"><path d="M4.5 0.3 L8.4 4.3 L6.4 4.3 L6.4 14.4 L2.6 14.4 L2.6 4.3 L0.6 4.3 Z" fill="#000"/></svg>
<svg style="left:270.1px;top:66px" width="46" height="32" viewBox="0 0 46 32"><path d="M9.85 17 V6 H18.6 L26.4 19.3" fill="none" stroke="#000" stroke-width="2.2" stroke-linejoin="miter"/><path d="M6.1 17.6 Q6.1 16 7.7 16 H13.6 V19 H28 V26.3 H6.1 Z" fill="#000"/><rect x="16" y="16" width="2.7" height="1.3" fill="#000"/><path d="M27.6 6 Q27.6 5.1 28.75 5.1 Q29.9 5.1 29.9 6 V28.6 H27.6 Z" fill="#000"/><circle cx="11.6" cy="27.9" r="3.5" fill="#000" stroke="#fff" stroke-width="0.7"/><circle cx="11.6" cy="27.9" r="1.05" fill="#fff"/><circle cx="23.5" cy="27.9" r="3.5" fill="#000" stroke="#fff" stroke-width="0.7"/><circle cx="23.5" cy="27.9" r="1.05" fill="#fff"/><rect x="29" y="26.9" width="9.8" height="2.4" fill="#000"/><path d="M34.3 9.9 Q33.6 8 34.4 6.4 Q35.4 4.9 36.4 6.4 Q37.2 8 36.5 9.9 Z" fill="#000"/><path d="M31.6 10.4 L33 9.8 H37.8 L39 10.4 L37.8 11 H33 Z" fill="#000"/><path d="M33.7 11 L34.9 24.8 H35.9 L37.1 11 Z" fill="#fff" stroke="#111" stroke-width="0.8"/></svg>
<div class="t" style="left:15.50px;width:400px;text-align:center;top:112.17px;font-size:4.50px;color:#333;transform:scaleX(0.8000);transform-origin:center center;font-weight:bold;-webkit-text-stroke:0.22px currentColor;">Tip Box 1</div>
<div class="t" style="left:15.50px;width:400px;text-align:center;top:115.53px;font-size:3.25px;color:#c4c4c4;transform:scaleX(0.8929);transform-origin:center center;">125µL Tips - A1:P24 (Q3)</div>
<div class="t" style="left:281.80px;top:102.11px;font-size:4.76px;color:#222;transform:scaleX(0.8929);transform-origin:left center;font-weight:bold;-webkit-text-stroke:0.22px currentColor;">125µL Tips</div>
<div class="r" style="left:193.2px;top:126.2px;width:7.6px;height:7.6px;border-radius:50%;background:#cc1a7f;"></div>
<div class="t" style="left:-3.00px;width:400px;text-align:center;top:128.44px;font-size:4.70px;color:#fff;transform:scaleX(0.8929);transform-origin:center center;font-weight:bold;-webkit-text-stroke:0.22px currentColor;">1</div>
<div class="t" style="left:204.40px;top:128.70px;font-size:4.77px;color:#8a8a8a;transform:scaleX(0.8929);transform-origin:left center;">Load <b>Pipette Head</b> with <b>125µL Tips</b> from <b>Tip Box 1</b></div>
<svg style="left:366px;top:65.7px" width="57" height="39.5" viewBox="0 0 57 39.5"><path d="M3.6 0.6 L53.4 0.6 Q55.4 0.6 55.4 2.6 L55.4 35.9 Q55.4 37.9 53.4 37.9 L2.6 37.9 Q0.6 37.9 0.6 35.9 L0.6 3.6 Q0.6 0.6 3.6 0.6 Z" fill="#fff" stroke="#a0a0a0" stroke-width="1.2"/><circle cx="6.60" cy="4.80" r="1.25" fill="#86916e"/><circle cx="6.60" cy="8.94" r="1.25" fill="#86916e"/><circle cx="6.60" cy="13.08" r="1.25" fill="#86916e"/><circle cx="6.60" cy="17.22" r="1.25" fill="#86916e"/><circle cx="6.60" cy="21.36" r="1.25" fill="#86916e"/><circle cx="6.60" cy="25.50" r="1.25" fill="#86916e"/><circle cx="6.60" cy="29.64" r="1.25" fill="#86916e"/><circle cx="6.60" cy="33.78" r="1.25" fill="#86916e"/><circle cx="10.53" cy="4.80" r="1.25" fill="#86916e"/><circle cx="10.53" cy="8.94" r="1.25" fill="#86916e"/><circle cx="10.53" cy="13.08" r="1.25" fill="#86916e"/><circle cx="10.53" cy="17.22" r="1.25" fill="#86916e"/><circle cx="10.53" cy="21.36" r="1.25" fill="#86916e"/><circle cx="10.53" cy="25.50" r="1.25" fill="#86916e"/><circle cx="10.53" cy="29.64" r="1.25" fill="#86916e"/><circle cx="10.53" cy="33.78" r="1.25" fill="#86916e"/><circle cx="14.46" cy="4.80" r="1.25" fill="#86916e"/><circle cx="14.46" cy="8.94" r="1.25" fill="#86916e"/><circle cx="14.46" cy="13.08" r="1.25" fill="#86916e"/><circle cx="14.46" cy="17.22" r="1.25" fill="#86916e"/><circle cx="14.46" cy="21.36" r="1.25" fill="#86916e"/><circle cx="14.46" cy="25.50" r="1.25" fill="#86916e"/><circle cx="14.46" cy="29.64" r="1.25" fill="#86916e"/><circle cx="14.46" cy="33.78" r="1.25" fill="#86916e"/><circle cx="18.39" cy="4.80" r="1.25" fill="#f0f0f0"/><circle cx="18.39" cy="8.94" r="1.25" fill="#f0f0f0"/><circle cx="18.39" cy="13.08" r="1.25" fill="#f0f0f0"/><circle cx="18.39" cy="17.22" r="1.25" fill="#f0f0f0"/><circle cx="18.39" cy="21.36" r="1.25" fill="#f0f0f0"/><circle cx="18.39" cy="25.50" r="1.25" fill="#f0f0f0"/><circle cx="18.39" cy="29.64" r="1.25" fill="#f0f0f0"/><circle cx="18.39" cy="33.78" r="1.25" fill="#f0f0f0"/><circle cx="22.32" cy="4.80" r="1.25" fill="#f0f0f0"/><circle cx="22.32" cy="8.94" r="1.25" fill="#f0f0f0"/><circle cx="22.32" cy="13.08" r="1.25" fill="#f0f0f0"/><circle cx="22.32" cy="17.22" r="1.25" fill="#f0f0f0"/><circle cx="22.32" cy="21.36" r="1.25" fill="#f0f0f0"/><circle cx="22.32" cy="25.50" r="1.25" fill="#f0f0f0"/><circle cx="22.32" cy="29.64" r="1.25" fill="#f0f0f0"/><circle cx="22.32" cy="33.78" r="1.25" fill="#f0f0f0"/><circle cx="26.25" cy="4.80" r="1.25" fill="#f0f0f0"/><circle cx="26.25" cy="8.94" r="1.25" fill="#f0f0f0"/><circle cx="26.25" cy="13.08" r="1.25" fill="#f0f0f0"/><circle cx="26.25" cy="17.22" r="1.25" fill="#f0f0f0"/><circle cx="26.25" cy="21.36" r="1.25" fill="#f0f0f0"/><circle cx="26.25" cy="25.50" r="1.25" fill="#f0f0f0"/><circle cx="26.25" cy="29.64" r="1.25" fill="#f0f0f0"/><circle cx="26.25" cy="33.78" r="1.25" fill="#f0f0f0"/><circle cx="30.18" cy="4.80" r="1.25" fill="#f0f0f0"/><circle cx="30.18" cy="8.94" r="1.25" fill="#f0f0f0"/><circle cx="30.18" cy="13.08" r="1.25" fill="#f0f0f0"/><circle cx="30.18" cy="17.22" r="1.25" fill="#f0f0f0"/><circle cx="30.18" cy="21.36" r="1.25" fill="#f0f0f0"/><circle cx="30.18" cy="25.50" r="1.25" fill="#f0f0f0"/><circle cx="30.18" cy="29.64" r="1.25" fill="#f0f0f0"/><circle cx="30.18" cy="33.78" r="1.25" fill="#f0f0f0"/><circle cx="34.11" cy="4.80" r="1.25" fill="#f0f0f0"/><circle cx="34.11" cy="8.94" r="1.25" fill="#f0f0f0"/><circle cx="34.11" cy="13.08" r="1.25" fill="#f0f0f0"/><circle cx="34.11" cy="17.22" r="1.25" fill="#f0f0f0"/><circle cx="34.11" cy="21.36" r="1.25" fill="#f0f0f0"/><circle cx="34.11" cy="25.50" r="1.25" fill="#f0f0f0"/><circle cx="34.11" cy="29.64" r="1.25" fill="#f0f0f0"/><circle cx="34.11" cy="33.78" r="1.25" fill="#f0f0f0"/><circle cx="38.04" cy="4.80" r="1.25" fill="#f0f0f0"/><circle cx="38.04" cy="8.94" r="1.25" fill="#f0f0f0"/><circle cx="38.04" cy="13.08" r="1.25" fill="#f0f0f0"/><circle cx="38.04" cy="17.22" r="1.25" fill="#f0f0f0"/><circle cx="38.04" cy="21.36" r="1.25" fill="#f0f0f0"/><circle cx="38.04" cy="25.50" r="1.25" fill="#f0f0f0"/><circle cx="38.04" cy="29.64" r="1.25" fill="#f0f0f0"/><circle cx="38.04" cy="33.78" r="1.25" fill="#f0f0f0"/><circle cx="41.97" cy="4.80" r="1.25" fill="#dcdcdc"/><circle cx="41.97" cy="8.94" r="1.25" fill="#dcdcdc"/><circle cx="41.97" cy="13.08" r="1.25" fill="#dcdcdc"/><circle cx="41.97" cy="17.22" r="1.25" fill="#dcdcdc"/><circle cx="41.97" cy="21.36" r="1.25" fill="#dcdcdc"/><circle cx="41.97" cy="25.50" r="1.25" fill="#dcdcdc"/><circle cx="41.97" cy="29.64" r="1.25" fill="#dcdcdc"/><circle cx="41.97" cy="33.78" r="1.25" fill="#dcdcdc"/><circle cx="45.90" cy="4.80" r="1.25" fill="#dcdcdc"/><circle cx="45.90" cy="8.94" r="1.25" fill="#dcdcdc"/><circle cx="45.90" cy="13.08" r="1.25" fill="#dcdcdc"/><circle cx="45.90" cy="17.22" r="1.25" fill="#dcdcdc"/><circle cx="45.90" cy="21.36" r="1.25" fill="#dcdcdc"/><circle cx="45.90" cy="25.50" r="1.25" fill="#dcdcdc"/><circle cx="45.90" cy="29.64" r="1.25" fill="#dcdcdc"/><circle cx="45.90" cy="33.78" r="1.25" fill="#dcdcdc"/><circle cx="49.83" cy="4.80" r="1.25" fill="#dcdcdc"/><circle cx="49.83" cy="8.94" r="1.25" fill="#dcdcdc"/><circle cx="49.83" cy="13.08" r="1.25" fill="#dcdcdc"/><circle cx="49.83" cy="17.22" r="1.25" fill="#dcdcdc"/><circle cx="49.83" cy="21.36" r="1.25" fill="#dcdcdc"/><circle cx="49.83" cy="25.50" r="1.25" fill="#dcdcdc"/><circle cx="49.83" cy="29.64" r="1.25" fill="#dcdcdc"/><circle cx="49.83" cy="33.78" r="1.25" fill="#dcdcdc"/></svg>
<svg style="left:455.3px;top:65.8px" width="56.3" height="39.5" viewBox="0 0 56.3 39.5"><path d="M3.6 0.6 L52.699999999999996 0.6 Q54.699999999999996 0.6 54.699999999999996 2.6 L54.699999999999996 35.9 Q54.699999999999996 37.9 52.699999999999996 37.9 L2.6 37.9 Q0.6 37.9 0.6 35.9 L0.6 3.6 Q0.6 0.6 3.6 0.6 Z" fill="#fff" stroke="#a0a0a0" stroke-width="1.2"/><circle cx="6.40" cy="5.00" r="1.25" fill="#dedede"/><circle cx="6.40" cy="9.10" r="1.25" fill="#dedede"/><circle cx="6.40" cy="13.20" r="1.25" fill="#dedede"/><circle cx="6.40" cy="17.30" r="1.25" fill="#dedede"/><circle cx="6.40" cy="21.40" r="1.25" fill="#dedede"/><circle cx="6.40" cy="25.50" r="1.25" fill="#dedede"/><circle cx="6.40" cy="29.60" r="1.25" fill="#dedede"/><circle cx="6.40" cy="33.70" r="1.25" fill="#dedede"/><circle cx="10.30" cy="5.00" r="1.25" fill="#dedede"/><circle cx="10.30" cy="9.10" r="1.25" fill="#dedede"/><circle cx="10.30" cy="13.20" r="1.25" fill="#dedede"/><circle cx="10.30" cy="17.30" r="1.25" fill="#dedede"/><circle cx="10.30" cy="21.40" r="1.25" fill="#dedede"/><circle cx="10.30" cy="25.50" r="1.25" fill="#dedede"/><circle cx="10.30" cy="29.60" r="1.25" fill="#dedede"/><circle cx="10.30" cy="33.70" r="1.25" fill="#dedede"/><circle cx="14.20" cy="5.00" r="1.25" fill="#dedede"/><circle cx="14.20" cy="9.10" r="1.25" fill="#dedede"/><circle cx="14.20" cy="13.20" r="1.25" fill="#dedede"/><circle cx="14.20" cy="17.30" r="1.25" fill="#dedede"/><circle cx="14.20" cy="21.40" r="1.25" fill="#dedede"/><circle cx="14.20" cy="25.50" r="1.25" fill="#dedede"/><circle cx="14.20" cy="29.60" r="1.25" fill="#dedede"/><circle cx="14.20" cy="33.70" r="1.25" fill="#dedede"/><circle cx="18.10" cy="5.00" r="1.25" fill="#f0f0f0"/><circle cx="18.10" cy="9.10" r="1.25" fill="#f0f0f0"/><circle cx="18.10" cy="13.20" r="1.25" fill="#f0f0f0"/><circle cx="18.10" cy="17.30" r="1.25" fill="#f0f0f0"/><circle cx="18.10" cy="21.40" r="1.25" fill="#f0f0f0"/><circle cx="18.10" cy="25.50" r="1.25" fill="#f0f0f0"/><circle cx="18.10" cy="29.60" r="1.25" fill="#f0f0f0"/><circle cx="18.10" cy="33.70" r="1.25" fill="#f0f0f0"/><circle cx="22.00" cy="5.00" r="1.25" fill="#f0f0f0"/><circle cx="22.00" cy="9.10" r="1.25" fill="#f0f0f0"/><circle cx="22.00" cy="13.20" r="1.25" fill="#f0f0f0"/><circle cx="22.00" cy="17.30" r="1.25" fill="#f0f0f0"/><circle cx="22.00" cy="21.40" r="1.25" fill="#f0f0f0"/><circle cx="22.00" cy="25.50" r="1.25" fill="#f0f0f0"/><circle cx="22.00" cy="29.60" r="1.25" fill="#f0f0f0"/><circle cx="22.00" cy="33.70" r="1.25" fill="#f0f0f0"/><circle cx="25.90" cy="5.00" r="1.25" fill="#f0f0f0"/><circle cx="25.90" cy="9.10" r="1.25" fill="#f0f0f0"/><circle cx="25.90" cy="13.20" r="1.25" fill="#f0f0f0"/><circle cx="25.90" cy="17.30" r="1.25" fill="#f0f0f0"/><circle cx="25.90" cy="21.40" r="1.25" fill="#f0f0f0"/><circle cx="25.90" cy="25.50" r="1.25" fill="#f0f0f0"/><circle cx="25.90" cy="29.60" r="1.25" fill="#f0f0f0"/><circle cx="25.90" cy="33.70" r="1.25" fill="#f0f0f0"/><circle cx="29.80" cy="5.00" r="1.25" fill="#f0f0f0"/><circle cx="29.80" cy="9.10" r="1.25" fill="#f0f0f0"/><circle cx="29.80" cy="13.20" r="1.25" fill="#f0f0f0"/><circle cx="29.80" cy="17.30" r="1.25" fill="#f0f0f0"/><circle cx="29.80" cy="21.40" r="1.25" fill="#f0f0f0"/><circle cx="29.80" cy="25.50" r="1.25" fill="#f0f0f0"/><circle cx="29.80" cy="29.60" r="1.25" fill="#f0f0f0"/><circle cx="29.80" cy="33.70" r="1.25" fill="#f0f0f0"/><circle cx="33.70" cy="5.00" r="1.25" fill="#f0f0f0"/><circle cx="33.70" cy="9.10" r="1.25" fill="#f0f0f0"/><circle cx="33.70" cy="13.20" r="1.25" fill="#f0f0f0"/><circle cx="33.70" cy="17.30" r="1.25" fill="#f0f0f0"/><circle cx="33.70" cy="21.40" r="1.25" fill="#f0f0f0"/><circle cx="33.70" cy="25.50" r="1.25" fill="#f0f0f0"/><circle cx="33.70" cy="29.60" r="1.25" fill="#f0f0f0"/><circle cx="33.70" cy="33.70" r="1.25" fill="#f0f0f0"/><circle cx="37.60" cy="5.00" r="1.25" fill="#f0f0f0"/><circle cx="37.60" cy="9.10" r="1.25" fill="#f0f0f0"/><circle cx="37.60" cy="13.20" r="1.25" fill="#f0f0f0"/><circle cx="37.60" cy="17.30" r="1.25" fill="#f0f0f0"/><circle cx="37.60" cy="21.40" r="1.25" fill="#f0f0f0"/><circle cx="37.60" cy="25.50" r="1.25" fill="#f0f0f0"/><circle cx="37.60" cy="29.60" r="1.25" fill="#f0f0f0"/><circle cx="37.60" cy="33.70" r="1.25" fill="#f0f0f0"/><circle cx="41.50" cy="5.00" r="1.5" fill="#9bcd82"/><circle cx="41.50" cy="9.10" r="1.5" fill="#9bcd82"/><circle cx="41.50" cy="13.20" r="1.5" fill="#9bcd82"/><circle cx="41.50" cy="17.30" r="1.5" fill="#9bcd82"/><circle cx="41.50" cy="21.40" r="1.5" fill="#9bcd82"/><circle cx="41.50" cy="25.50" r="1.5" fill="#9bcd82"/><circle cx="41.50" cy="29.60" r="1.5" fill="#9bcd82"/><circle cx="41.50" cy="33.70" r="1.5" fill="#9bcd82"/><circle cx="45.40" cy="5.00" r="1.5" fill="#9bcd82"/><circle cx="45.40" cy="9.10" r="1.5" fill="#9bcd82"/><circle cx="45.40" cy="13.20" r="1.5" fill="#9bcd82"/><circle cx="45.40" cy="17.30" r="1.5" fill="#9bcd82"/><circle cx="45.40" cy="21.40" r="1.5" fill="#9bcd82"/><circle cx="45.40" cy="25.50" r="1.5" fill="#9bcd82"/><circle cx="45.40" cy="29.60" r="1.5" fill="#9bcd82"/><circle cx="45.40" cy="33.70" r="1.5" fill="#9bcd82"/><circle cx="49.30" cy="5.00" r="1.5" fill="#9bcd82"/><circle cx="49.30" cy="9.10" r="1.5" fill="#9bcd82"/><circle cx="49.30" cy="13.20" r="1.5" fill="#9bcd82"/><circle cx="49.30" cy="17.30" r="1.5" fill="#9bcd82"/><circle cx="49.30" cy="21.40" r="1.5" fill="#9bcd82"/><circle cx="49.30" cy="25.50" r="1.5" fill="#9bcd82"/><circle cx="49.30" cy="29.60" r="1.5" fill="#9bcd82"/><circle cx="49.30" cy="33.70" r="1.5" fill="#9bcd82"/></svg>
<div class="t" style="left:194.20px;width:400px;text-align:center;top:111.73px;font-size:3.99px;color:#444;transform:scaleX(0.8929);transform-origin:center center;font-weight:bold;-webkit-text-stroke:0.22px currentColor;-webkit-text-stroke:0.1px #444;">Well Array 1</div>
<div class="t" style="left:194.20px;width:400px;text-align:center;top:116.33px;font-size:3.25px;color:#b0b0b0;transform:scaleX(0.8929);transform-origin:center center;">Plate 1</div>
<div class="t" style="left:282.60px;width:400px;text-align:center;top:111.53px;font-size:3.99px;color:#444;transform:scaleX(0.8929);transform-origin:center center;font-weight:bold;-webkit-text-stroke:0.22px currentColor;-webkit-text-stroke:0.1px #444;">Well Array 2</div>
<div class="t" style="left:282.60px;width:400px;text-align:center;top:116.33px;font-size:3.25px;color:#b0b0b0;transform:scaleX(0.8929);transform-origin:center center;">Plate 1</div>
<svg style="left:410px;top:60px" width="60" height="25" viewBox="0 0 60 25"><path d="M7.5 15.8 Q20 2 34 6.8 Q41 9 46.5 12 L45 14.5 Q40 11.5 33.5 9.3 Q20 5.5 8 16.2 Z" fill="#000"/><path d="M42.4 15.4 L49.2 10.4 L49.8 19 Z" fill="#000"/></svg>
<div class="t" style="left:433.00px;top:71.84px;font-size:4.14px;color:#444;transform:scaleX(0.8929);transform-origin:left center;font-weight:bold;-webkit-text-stroke:0.22px currentColor;">40.0µL</div>
<div class="r" style="left:385.6px;top:126.1px;width:7.6px;height:7.6px;border-radius:50%;background:#cc1a7f;"></div>
<div class="t" style="left:189.40px;width:400px;text-align:center;top:128.34px;font-size:4.70px;color:#fff;transform:scaleX(0.8929);transform-origin:center center;font-weight:bold;-webkit-text-stroke:0.22px currentColor;">2</div>
<div class="t" style="left:396.70px;top:128.66px;font-size:4.85px;color:#8a8a8a;transform:scaleX(0.8929);transform-origin:left center;">Copy <b>40.0µL</b> from <b>Well Array 1</b> into <b>Well Array 2</b></div>
<svg style="left:188px;top:192.7px" width="56" height="39" viewBox="0 0 56 39"><rect x="0.65" y="0.65" width="54.7" height="37.7" rx="2.6" fill="#f5cf5a" stroke="#5a4812" stroke-width="1.3"/><rect x="2" y="2" width="52" height="35" rx="1.2" fill="#f4ecca"/><rect x="2" y="2" width="11" height="35" fill="#e7dfbf"/><circle cx="29.00" cy="6.00" r="1.15" fill="#c9b173"/><circle cx="29.00" cy="10.20" r="1.15" fill="#c9b173"/><circle cx="29.00" cy="14.40" r="1.15" fill="#c9b173"/><circle cx="29.00" cy="18.60" r="1.15" fill="#c9b173"/><circle cx="29.00" cy="22.80" r="1.15" fill="#c9b173"/><circle cx="29.00" cy="27.00" r="1.15" fill="#c9b173"/><circle cx="29.00" cy="31.20" r="1.15" fill="#c9b173"/><circle cx="29.00" cy="35.40" r="1.15" fill="#c9b173"/><circle cx="33.20" cy="6.00" r="1.15" fill="#c9b173"/><circle cx="33.20" cy="10.20" r="1.15" fill="#c9b173"/><circle cx="33.20" cy="14.40" r="1.15" fill="#c9b173"/><circle cx="33.20" cy="18.60" r="1.15" fill="#c9b173"/><circle cx="33.20" cy="22.80" r="1.15" fill="#c9b173"/><circle cx="33.20" cy="27.00" r="1.15" fill="#c9b173"/><circle cx="33.20" cy="31.20" r="1.15" fill="#c9b173"/><circle cx="33.20" cy="35.40" r="1.15" fill="#c9b173"/><circle cx="37.40" cy="6.00" r="1.15" fill="#c9b173"/><circle cx="37.40" cy="10.20" r="1.15" fill="#c9b173"/><circle cx="37.40" cy="14.40" r="1.15" fill="#c9b173"/><circle cx="37.40" cy="18.60" r="1.15" fill="#c9b173"/><circle cx="37.40" cy="22.80" r="1.15" fill="#c9b173"/><circle cx="37.40" cy="27.00" r="1.15" fill="#c9b173"/><circle cx="37.40" cy="31.20" r="1.15" fill="#c9b173"/><circle cx="37.40" cy="35.40" r="1.15" fill="#c9b173"/><circle cx="41.60" cy="6.00" r="1.15" fill="#c9b173"/><circle cx="41.60" cy="10.20" r="1.15" fill="#c9b173"/><circle cx="41.60" cy="14.40" r="1.15" fill="#c9b173"/><circle cx="41.60" cy="18.60" r="1.15" fill="#c9b173"/><circle cx="41.60" cy="22.80" r="1.15" fill="#c9b173"/><circle cx="41.60" cy="27.00" r="1.15" fill="#c9b173"/><circle cx="41.60" cy="31.20" r="1.15" fill="#c9b173"/><circle cx="41.60" cy="35.40" r="1.15" fill="#c9b173"/><circle cx="45.80" cy="6.00" r="1.15" fill="#c9b173"/><circle cx="45.80" cy="10.20" r="1.15" fill="#c9b173"/><circle cx="45.80" cy="14.40" r="1.15" fill="#c9b173"/><circle cx="45.80" cy="18.60" r="1.15" fill="#c9b173"/><circle cx="45.80" cy="22.80" r="1.15" fill="#c9b173"/><circle cx="45.80" cy="27.00" r="1.15" fill="#c9b173"/><circle cx="45.80" cy="31.20" r="1.15" fill="#c9b173"/><circle cx="45.80" cy="35.40" r="1.15" fill="#c9b173"/><circle cx="50.00" cy="6.00" r="1.15" fill="#c9b173"/><circle cx="50.00" cy="10.20" r="1.15" fill="#c9b173"/><circle cx="50.00" cy="14.40" r="1.15" fill="#c9b173"/><circle cx="50.00" cy="18.60" r="1.15" fill="#c9b173"/><circle cx="50.00" cy="22.80" r="1.15" fill="#c9b173"/><circle cx="50.00" cy="27.00" r="1.15" fill="#c9b173"/><circle cx="50.00" cy="31.20" r="1.15" fill="#c9b173"/><circle cx="50.00" cy="35.40" r="1.15" fill="#c9b173"/><circle cx="16.50" cy="6.00" r="1.55" fill="#f4e2a2" stroke="#000" stroke-width="1.2"/><circle cx="16.50" cy="10.20" r="1.55" fill="#f4e2a2" stroke="#000" stroke-width="1.2"/><circle cx="16.50" cy="14.40" r="1.55" fill="#f4e2a2" stroke="#000" stroke-width="1.2"/><circle cx="16.50" cy="18.60" r="1.55" fill="#f4e2a2" stroke="#000" stroke-width="1.2"/><circle cx="16.50" cy="22.80" r="1.55" fill="#f4e2a2" stroke="#000" stroke-width="1.2"/><circle cx="16.50" cy="27.00" r="1.55" fill="#f4e2a2" stroke="#000" stroke-width="1.2"/><circle cx="16.50" cy="31.20" r="1.55" fill="#f4e2a2" stroke="#000" stroke-width="1.2"/><circle cx="16.50" cy="35.40" r="1.55" fill="#f4e2a2" stroke="#000" stroke-width="1.2"/><circle cx="20.70" cy="6.00" r="1.55" fill="#f4e2a2" stroke="#000" stroke-width="1.2"/><circle cx="20.70" cy="10.20" r="1.55" fill="#f4e2a2" stroke="#000" stroke-width="1.2"/><circle cx="20.70" cy="14.40" r="1.55" fill="#f4e2a2" stroke="#000" stroke-width="1.2"/><circle cx="20.70" cy="18.60" r="1.55" fill="#f4e2a2" stroke="#000" stroke-width="1.2"/><circle cx="20.70" cy="22.80" r="1.55" fill="#f4e2a2" stroke="#000" stroke-width="1.2"/><circle cx="20.70" cy="27.00" r="1.55" fill="#f4e2a2" stroke="#000" stroke-width="1.2"/><circle cx="20.70" cy="31.20" r="1.55" fill="#f4e2a2" stroke="#000" stroke-width="1.2"/><circle cx="20.70" cy="35.40" r="1.55" fill="#f4e2a2" stroke="#000" stroke-width="1.2"/><circle cx="24.90" cy="6.00" r="1.55" fill="#f4e2a2" stroke="#000" stroke-width="1.2"/><circle cx="24.90" cy="10.20" r="1.55" fill="#f4e2a2" stroke="#000" stroke-width="1.2"/><circle cx="24.90" cy="14.40" r="1.55" fill="#f4e2a2" stroke="#000" stroke-width="1.2"/><circle cx="24.90" cy="18.60" r="1.55" fill="#f4e2a2" stroke="#000" stroke-width="1.2"/><circle cx="24.90" cy="22.80" r="1.55" fill="#f4e2a2" stroke="#000" stroke-width="1.2"/><circle cx="24.90" cy="27.00" r="1.55" fill="#f4e2a2" stroke="#000" stroke-width="1.2"/><circle cx="24.90" cy="31.20" r="1.55" fill="#f4e2a2" stroke="#000" stroke-width="1.2"/><circle cx="24.90" cy="35.40" r="1.55" fill="#f4e2a2" stroke="#000" stroke-width="1.2"/></svg>
<svg style="left:256.8px;top:204.2px" width="9.5" height="15" viewBox="0 0 9.5 15"><path d="M4.75 14.5 L8.6 10.5 L6.5 10.5 L6.5 0.5 L3 0.5 L3 10.5 L0.9 10.5 Z" fill="#000"/></svg>
<svg style="left:267px;top:192px" width="46" height="32" viewBox="0 0 46 32"><path d="M9.85 17 V6 H18.6 L26.4 19.3" fill="none" stroke="#000" stroke-width="2.2" stroke-linejoin="miter"/><path d="M6.1 17.6 Q6.1 16 7.7 16 H13.6 V19 H28 V26.3 H6.1 Z" fill="#000"/><rect x="16" y="16" width="2.7" height="1.3" fill="#000"/><path d="M27.6 6 Q27.6 5.1 28.75 5.1 Q29.9 5.1 29.9 6 V28.6 H27.6 Z" fill="#000"/><circle cx="11.6" cy="27.9" r="3.5" fill="#000" stroke="#fff" stroke-width="0.7"/><circle cx="11.6" cy="27.9" r="1.05" fill="#fff"/><circle cx="23.5" cy="27.9" r="3.5" fill="#000" stroke="#fff" stroke-width="0.7"/><circle cx="23.5" cy="27.9" r="1.05" fill="#fff"/><rect x="29" y="26.6" width="8.6" height="2.3" fill="#000"/><rect x="32.9" y="8.7" width="11.8" height="1.6" fill="#000"/><rect x="37" y="7.6" width="3.6" height="1.3" fill="#000"/><path d="M33.9 11.3 H43.6 L43.1 23.3 H34.4 Z" fill="#000"/><rect x="35.6" y="12.6" width="1.1" height="9.3" fill="#fff"/><rect x="38.3" y="12.6" width="1.1" height="9.3" fill="#fff"/><rect x="41" y="12.6" width="1.1" height="9.3" fill="#fff"/></svg>
<div class="t" style="left:15.80px;width:400px;text-align:center;top:237.97px;font-size:4.50px;color:#333;transform:scaleX(0.8000);transform-origin:center center;font-weight:bold;-webkit-text-stroke:0.22px currentColor;">Tip Box 1</div>
<div class="t" style="left:15.80px;width:400px;text-align:center;top:241.53px;font-size:3.25px;color:#c4c4c4;transform:scaleX(0.8929);transform-origin:center center;">125µL Tips - A1:P24 (Q3)</div>
<div class="t" style="left:280.70px;top:228.11px;font-size:4.76px;color:#222;transform:scaleX(0.8929);transform-origin:left center;font-weight:bold;-webkit-text-stroke:0.22px currentColor;">125µL Tips</div>
<div class="r" style="left:190.1px;top:252.4px;width:7.6px;height:7.6px;border-radius:50%;background:#8e2b8e;box-shadow:0 1px 3px #f3a6d6;"></div>
<div class="t" style="left:-6.10px;width:400px;text-align:center;top:254.64px;font-size:4.70px;color:#fff;transform:scaleX(0.8929);transform-origin:center center;font-weight:bold;-webkit-text-stroke:0.22px currentColor;">3</div>
<div class="t" style="left:202.00px;top:254.86px;font-size:4.85px;color:#8a8a8a;transform:scaleX(0.8929);transform-origin:left center;">Discard loaded tips from <b>Pipette Head</b> into <b>Tip Box 1</b></div>
<svg style="left:431.5px;top:220.5px" width="15" height="15" viewBox="0 0 15 15"><path d="M7.5 0.3 V14.2 M0.4 7.3 H14.6" stroke="#cccccc" stroke-width="1.6"/></svg>
<div class="t" style="left:428.20px;top:243.25px;font-size:5.60px;color:#c8c8c8;transform:scaleX(0.8929);transform-origin:left center;">Add Step</div>
<svg style="left:437px;top:337.5px" width="85" height="8" viewBox="0 0 85 8"><path d="M0.8 4 H5" stroke="#cfcfcf" stroke-width="0.8"/><path d="M10 4 H73.5" stroke="#d0d0d0" stroke-width="0.9"/><rect x="64.2" y="0.5" width="1.8" height="7" fill="#8a8a8a"/><path d="M79 4 H84 M81.5 1.5 V6.5" stroke="#bdbdbd" stroke-width="0.8"/></svg>
<div class="r" style="left:155px;top:351.3px;width:377px;height:1.6px;background:#dddddd;"></div>
<svg style="left:172.5px;top:370.8px" width="88" height="64" viewBox="0 0 88 64"><path d="M6.15 0.65 L84.35 0.65 Q86.35 0.65 86.35 2.65 L86.35 60.35 Q86.35 62.35 84.35 62.35 L2.65 62.35 Q0.65 62.35 0.65 60.35 L0.65 6.15 Q0.65 0.65 6.15 0.65 Z" fill="#fff" stroke="#bdbdbd" stroke-width="1.3"/><text x="10.00" y="5.2" font-size="1.8" fill="#999" text-anchor="middle" font-family="Liberation Sans">1</text><text x="16.10" y="5.2" font-size="1.8" fill="#999" text-anchor="middle" font-family="Liberation Sans">2</text><text x="22.20" y="5.2" font-size="1.8" fill="#999" text-anchor="middle" font-family="Liberation Sans">3</text><text x="28.30" y="5.2" font-size="1.8" fill="#999" text-anchor="middle" font-family="Liberation Sans">4</text><text x="34.40" y="5.2" font-size="1.8" fill="#999" text-anchor="middle" font-family="Liberation Sans">5</text><text x="40.50" y="5.2" font-size="1.8" fill="#999" text-anchor="middle" font-family="Liberation Sans">6</text><text x="46.60" y="5.2" font-size="1.8" fill="#999" text-anchor="middle" font-family="Liberation Sans">7</text><text x="52.70" y="5.2" font-size="1.8" fill="#999" text-anchor="middle" font-family="Liberation Sans">8</text><text x="58.80" y="5.2" font-size="1.8" fill="#999" text-anchor="middle" font-family="Liberation Sans">9</text><text x="64.90" y="5.2" font-size="1.8" fill="#999" text-anchor="middle" font-family="Liberation Sans">10</text><text x="71.00" y="5.2" font-size="1.8" fill="#999" text-anchor="middle" font-family="Liberation Sans">11</text><text x="77.10" y="5.2" font-size="1.8" fill="#999" text-anchor="middle" font-family="Liberation Sans">12</text><text x="5.8" y="8.70" font-size="1.8" fill="#999" text-anchor="middle" font-family="Liberation Sans">A</text><text x="5.8" y="15.40" font-size="1.8" fill="#999" text-anchor="middle" font-family="Liberation Sans">B</text><text x="5.8" y="22.10" font-size="1.8" fill="#999" text-anchor="middle" font-family="Liberation Sans">C</text><text x="5.8" y="28.80" font-size="1.8" fill="#999" text-anchor="middle" font-family="Liberation Sans">D</text><text x="5.8" y="35.50" font-size="1.8" fill="#999" text-anchor="middle" font-family="Liberation Sans">E</text><text x="5.8" y="42.20" font-size="1.8" fill="#999" text-anchor="middle" font-family="Liberation Sans">F</text><text x="5.8" y="48.90" font-size="1.8" fill="#999" text-anchor="middle" font-family="Liberation Sans">G</text><text x="5.8" y="55.60" font-size="1.8" fill="#999" text-anchor="middle" font-family="Liberation Sans">H</text><circle cx="10.00" cy="8.10" r="1.95" fill="#8b9577" stroke="#a3ab90" stroke-width="0.4"/><circle cx="10.00" cy="14.80" r="1.95" fill="#8b9577" stroke="#a3ab90" stroke-width="0.4"/><circle cx="10.00" cy="21.50" r="1.95" fill="#8b9577" stroke="#a3ab90" stroke-width="0.4"/><circle cx="10.00" cy="28.20" r="1.95" fill="#8b9577" stroke="#a3ab90" stroke-width="0.4"/><circle cx="10.00" cy="34.90" r="1.95" fill="#8b9577" stroke="#a3ab90" stroke-width="0.4"/><circle cx="10.00" cy="41.60" r="1.95" fill="#8b9577" stroke="#a3ab90" stroke-width="0.4"/><circle cx="10.00" cy="48.30" r="1.95" fill="#8b9577" stroke="#a3ab90" stroke-width="0.4"/><circle cx="10.00" cy="55.00" r="1.95" fill="#8b9577" stroke="#a3ab90" stroke-width="0.4"/><circle cx="16.10" cy="8.10" r="1.95" fill="#8b9577" stroke="#a3ab90" stroke-width="0.4"/><circle cx="16.10" cy="14.80" r="1.95" fill="#8b9577" stroke="#a3ab90" stroke-width="0.4"/><circle cx="16.10" cy="21.50" r="1.95" fill="#8b9577" stroke="#a3ab90" stroke-width="0.4"/><circle cx="16.10" cy="28.20" r="1.95" fill="#8b9577" stroke="#a3ab90" stroke-width="0.4"/><circle cx="16.10" cy="34.90" r="1.95" fill="#8b9577" stroke="#a3ab90" stroke-width="0.4"/><circle cx="16.10" cy="41.60" r="1.95" fill="#8b9577" stroke="#a3ab90" stroke-width="0.4"/><circle cx="16.10" cy="48.30" r="1.95" fill="#8b9577" stroke="#a3ab90" stroke-width="0.4"/><circle cx="16.10" cy="55.00" r="1.95" fill="#8b9577" stroke="#a3ab90" stroke-width="0.4"/><circle cx="22.20" cy="8.10" r="1.95" fill="#8b9577" stroke="#a3ab90" stroke-width="0.4"/><circle cx="22.20" cy="14.80" r="1.95" fill="#8b9577" stroke="#a3ab90" stroke-width="0.4"/><circle cx="22.20" cy="21.50" r="1.95" fill="#8b9577" stroke="#a3ab90" stroke-width="0.4"/><circle cx="22.20" cy="28.20" r="1.95" fill="#8b9577" stroke="#a3ab90" stroke-width="0.4"/><circle cx="22.20" cy="34.90" r="1.95" fill="#8b9577" stroke="#a3ab90" stroke-width="0.4"/><circle cx="22.20" cy="41.60" r="1.95" fill="#8b9577" stroke="#a3ab90" stroke-width="0.4"/><circle cx="22.20" cy="48.30" r="1.95" fill="#8b9577" stroke="#a3ab90" stroke-width="0.4"/><circle cx="22.20" cy="55.00" r="1.95" fill="#8b9577" stroke="#a3ab90" stroke-width="0.4"/><circle cx="28.30" cy="8.10" r="1.8" fill="#ffffff" stroke="#e0e0e0" stroke-width="0.5"/><circle cx="28.30" cy="14.80" r="1.8" fill="#ffffff" stroke="#e0e0e0" stroke-width="0.5"/><circle cx="28.30" cy="21.50" r="1.8" fill="#ffffff" stroke="#e0e0e0" stroke-width="0.5"/><circle cx="28.30" cy="28.20" r="1.8" fill="#ffffff" stroke="#e0e0e0" stroke-width="0.5"/><circle cx="28.30" cy="34.90" r="1.8" fill="#ffffff" stroke="#e0e0e0" stroke-width="0.5"/><circle cx="28.30" cy="41.60" r="1.8" fill="#ffffff" stroke="#e0e0e0" stroke-width="0.5"/><circle cx="28.30" cy="48.30" r="1.8" fill="#ffffff" stroke="#e0e0e0" stroke-width="0.5"/><circle cx="28.30" cy="55.00" r="1.8" fill="#ffffff" stroke="#e0e0e0" stroke-width="0.5"/><circle cx="34.40" cy="8.10" r="1.8" fill="#ffffff" stroke="#e0e0e0" stroke-width="0.5"/><circle cx="34.40" cy="14.80" r="1.8" fill="#ffffff" stroke="#e0e0e0" stroke-width="0.5"/><circle cx="34.40" cy="21.50" r="1.8" fill="#ffffff" stroke="#e0e0e0" stroke-width="0.5"/><circle cx="34.40" cy="28.20" r="1.8" fill="#ffffff" stroke="#e0e0e0" stroke-width="0.5"/><circle cx="34.40" cy="34.90" r="1.8" fill="#ffffff" stroke="#e0e0e0" stroke-width="0.5"/><circle cx="34.40" cy="41.60" r="1.8" fill="#ffffff" stroke="#e0e0e0" stroke-width="0.5"/><circle cx="34.40" cy="48.30" r="1.8" fill="#ffffff" stroke="#e0e0e0" stroke-width="0.5"/><circle cx="34.40" cy="55.00" r="1.8" fill="#ffffff" stroke="#e0e0e0" stroke-width="0.5"/><circle cx="40.50" cy="8.10" r="1.8" fill="#ffffff" stroke="#e0e0e0" stroke-width="0.5"/><circle cx="40.50" cy="14.80" r="1.8" fill="#ffffff" stroke="#e0e0e0" stroke-width="0.5"/><circle cx="40.50" cy="21.50" r="1.8" fill="#ffffff" stroke="#e0e0e0" stroke-width="0.5"/><circle cx="40.50" cy="28.20" r="1.8" fill="#ffffff" stroke="#e0e0e0" stroke-width="0.5"/><circle cx="40.50" cy="34.90" r="1.8" fill="#ffffff" stroke="#e0e0e0" stroke-width="0.5"/><circle cx="40.50" cy="41.60" r="1.8" fill="#ffffff" stroke="#e0e0e0" stroke-width="0.5"/><circle cx="40.50" cy="48.30" r="1.8" fill="#ffffff" stroke="#e0e0e0" stroke-width="0.5"/><circle cx="40.50" cy="55.00" r="1.8" fill="#ffffff" stroke="#e0e0e0" stroke-width="0.5"/><circle cx="46.60" cy="8.10" r="1.8" fill="#ffffff" stroke="#e0e0e0" stroke-width="0.5"/><circle cx="46.60" cy="14.80" r="1.8" fill="#ffffff" stroke="#e0e0e0" stroke-width="0.5"/><circle cx="46.60" cy="21.50" r="1.8" fill="#ffffff" stroke="#e0e0e0" stroke-width="0.5"/><circle cx="46.60" cy="28.20" r="1.8" fill="#ffffff" stroke="#e0e0e0" stroke-width="0.5"/><circle cx="46.60" cy="34.90" r="1.8" fill="#ffffff" stroke="#e0e0e0" stroke-width="0.5"/><circle cx="46.60" cy="41.60" r="1.8" fill="#ffffff" stroke="#e0e0e0" stroke-width="0.5"/><circle cx="46.60" cy="48.30" r="1.8" fill="#ffffff" stroke="#e0e0e0" stroke-width="0.5"/><circle cx="46.60" cy="55.00" r="1.8" fill="#ffffff" stroke="#e0e0e0" stroke-width="0.5"/><circle cx="52.70" cy="8.10" r="1.8" fill="#ffffff" stroke="#e0e0e0" stroke-width="0.5"/><circle cx="52.70" cy="14.80" r="1.8" fill="#ffffff" stroke="#e0e0e0" stroke-width="0.5"/><circle cx="52.70" cy="21.50" r="1.8" fill="#ffffff" stroke="#e0e0e0" stroke-width="0.5"/><circle cx="52.70" cy="28.20" r="1.8" fill="#ffffff" stroke="#e0e0e0" stroke-width="0.5"/><circle cx="52.70" cy="34.90" r="1.8" fill="#ffffff" stroke="#e0e0e0" stroke-width="0.5"/><circle cx="52.70" cy="41.60" r="1.8" fill="#ffffff" stroke="#e0e0e0" stroke-width="0.5"/><circle cx="52.70" cy="48.30" r="1.8" fill="#ffffff" stroke="#e0e0e0" stroke-width="0.5"/><circle cx="52.70" cy="55.00" r="1.8" fill="#ffffff" stroke="#e0e0e0" stroke-width="0.5"/><circle cx="58.80" cy="8.10" r="1.8" fill="#ffffff" stroke="#e0e0e0" stroke-width="0.5"/><circle cx="58.80" cy="14.80" r="1.8" fill="#ffffff" stroke="#e0e0e0" stroke-width="0.5"/><circle cx="58.80" cy="21.50" r="1.8" fill="#ffffff" stroke="#e0e0e0" stroke-width="0.5"/><circle cx="58.80" cy="28.20" r="1.8" fill="#ffffff" stroke="#e0e0e0" stroke-width="0.5"/><circle cx="58.80" cy="34.90" r="1.8" fill="#ffffff" stroke="#e0e0e0" stroke-width="0.5"/><circle cx="58.80" cy="41.60" r="1.8" fill="#ffffff" stroke="#e0e0e0" stroke-width="0.5"/><circle cx="58.80" cy="48.30" r="1.8" fill="#ffffff" stroke="#e0e0e0" stroke-width="0.5"/><circle cx="58.80" cy="55.00" r="1.8" fill="#ffffff" stroke="#e0e0e0" stroke-width="0.5"/><circle cx="64.90" cy="8.10" r="1.95" fill="#b6cf96" stroke="#c6d9ae" stroke-width="0.4"/><circle cx="64.90" cy="14.80" r="1.95" fill="#b6cf96" stroke="#c6d9ae" stroke-width="0.4"/><circle cx="64.90" cy="21.50" r="1.95" fill="#b6cf96" stroke="#c6d9ae" stroke-width="0.4"/><circle cx="64.90" cy="28.20" r="1.95" fill="#b6cf96" stroke="#c6d9ae" stroke-width="0.4"/><circle cx="64.90" cy="34.90" r="1.95" fill="#b6cf96" stroke="#c6d9ae" stroke-width="0.4"/><circle cx="64.90" cy="41.60" r="1.95" fill="#b6cf96" stroke="#c6d9ae" stroke-width="0.4"/><circle cx="64.90" cy="48.30" r="1.95" fill="#b6cf96" stroke="#c6d9ae" stroke-width="0.4"/><circle cx="64.90" cy="55.00" r="1.95" fill="#b6cf96" stroke="#c6d9ae" stroke-width="0.4"/><circle cx="71.00" cy="8.10" r="1.95" fill="#b6cf96" stroke="#c6d9ae" stroke-width="0.4"/><circle cx="71.00" cy="14.80" r="1.95" fill="#b6cf96" stroke="#c6d9ae" stroke-width="0.4"/><circle cx="71.00" cy="21.50" r="1.95" fill="#b6cf96" stroke="#c6d9ae" stroke-width="0.4"/><circle cx="71.00" cy="28.20" r="1.95" fill="#b6cf96" stroke="#c6d9ae" stroke-width="0.4"/><circle cx="71.00" cy="34.90" r="1.95" fill="#b6cf96" stroke="#c6d9ae" stroke-width="0.4"/><circle cx="71.00" cy="41.60" r="1.95" fill="#b6cf96" stroke="#c6d9ae" stroke-width="0.4"/><circle cx="71.00" cy="48.30" r="1.95" fill="#b6cf96" stroke="#c6d9ae" stroke-width="0.4"/><circle cx="71.00" cy="55.00" r="1.95" fill="#b6cf96" stroke="#c6d9ae" stroke-width="0.4"/><circle cx="77.10" cy="8.10" r="1.95" fill="#b6cf96" stroke="#c6d9ae" stroke-width="0.4"/><circle cx="77.10" cy="14.80" r="1.95" fill="#b6cf96" stroke="#c6d9ae" stroke-width="0.4"/><circle cx="77.10" cy="21.50" r="1.95" fill="#b6cf96" stroke="#c6d9ae" stroke-width="0.4"/><circle cx="77.10" cy="28.20" r="1.95" fill="#b6cf96" stroke="#c6d9ae" stroke-width="0.4"/><circle cx="77.10" cy="34.90" r="1.95" fill="#b6cf96" stroke="#c6d9ae" stroke-width="0.4"/><circle cx="77.10" cy="41.60" r="1.95" fill="#b6cf96" stroke="#c6d9ae" stroke-width="0.4"/><circle cx="77.10" cy="48.30" r="1.95" fill="#b6cf96" stroke="#c6d9ae" stroke-width="0.4"/><circle cx="77.10" cy="55.00" r="1.95" fill="#b6cf96" stroke="#c6d9ae" stroke-width="0.4"/></svg>
<svg style="left:245px;top:365px" width="14" height="4" viewBox="0 0 14 4"><circle cx="1.5" cy="2" r="1" fill="none" stroke="#bbb" stroke-width="0.5"/><rect x="5.2" y="0.6" width="2.8" height="2.8" fill="none" stroke="#aaa" stroke-width="0.5"/><rect x="10.8" y="0.5" width="2" height="3" fill="#777"/></svg>
<div class="t" style="left:16.00px;width:400px;text-align:center;top:436.57px;font-size:2.99px;color:#555;transform:scaleX(0.8696);transform-origin:center center;-webkit-text-stroke:0.08px #555;">Plate 1</div>
<div class="t" style="left:16.00px;width:400px;text-align:center;top:440.34px;font-size:2.52px;color:#7a8a90;transform:scaleX(0.8333);transform-origin:center center;-webkit-text-stroke:0.1px #7a8a90;">Corning 96-well PCR</div>
<div class="t" style="left:16.20px;width:400px;text-align:center;top:443.62px;font-size:2.50px;color:#999;">Sealed</div>
<svg style="left:338.5px;top:397.5px" width="10" height="10" viewBox="0 0 10 10"><path d="M5 0.5 V9.5 M0.5 5 H9.5" stroke="#c9c9c9" stroke-width="0.9"/></svg>
<div class="t" style="left:334.30px;top:411.58px;font-size:4.63px;color:#c6c6c6;transform:scaleX(0.8929);transform-origin:left center;">Add Plate</div>
<svg style="left:437px;top:455.7px" width="85" height="8" viewBox="0 0 85 8"><path d="M0.8 4 H5" stroke="#cfcfcf" stroke-width="0.8"/><path d="M10 4 H72.60000000000002" stroke="#d0d0d0" stroke-width="0.9"/><rect x="57.500000000000014" y="0.5" width="1.8" height="7" fill="#8a8a8a"/><path d="M79 4 H84 M81.5 1.5 V6.5" stroke="#bdbdbd" stroke-width="0.8"/></svg>
<div class="r" style="left:152px;top:470.5px;width:380px;height:10.5px;background:#f1f1f1;"></div>
<div class="r" style="left:532px;top:470.5px;width:2.7px;height:10.5px;background:#ffffff;"></div>
<svg style="left:158px;top:472px" width="10" height="8" viewBox="0 0 10 8"><rect x="0.5" y="1.5" width="8.5" height="6" fill="none" stroke="#9a9a9a" stroke-width="0.6" stroke-dasharray="1.2 0.6"/><rect x="0.6" y="0.8" width="1.8" height="1.1" fill="#555"/><rect x="6.5" y="6.8" width="2.4" height="1.1" fill="#555"/><path d="M2.5 4.6 H7" stroke="#777" stroke-width="0.7" stroke-dasharray="1 0.7"/></svg>
<svg style="left:171.5px;top:472px" width="8" height="8" viewBox="0 0 8 8"><rect x="0.5" y="1.2" width="6.5" height="6.2" fill="none" stroke="#a0a0a0" stroke-width="0.6" stroke-dasharray="1.2 0.6"/><rect x="0.4" y="0.5" width="1.6" height="1.1" fill="#555"/><rect x="0.4" y="6.8" width="6.6" height="1" fill="#666"/><path d="M2.3 4.3 L5 3" stroke="#999" stroke-width="0.6"/></svg>
<svg style="left:183.5px;top:472.8px" width="9.5" height="6.7" viewBox="0 0 9.5 6.7"><rect x="0.3" y="0.3" width="8.9" height="6.1" fill="#d4d4d4" stroke="#9a9a9a" stroke-width="0.6"/><path d="M3.3 0.3 V6.4 M6.3 0.3 V6.4 M0.3 3.35 H9.2" stroke="#9a9a9a" stroke-width="0.5"/></svg>
<div class="r" style="left:533.2px;top:40.2px;width:132.4px;height:41.4px;border:2px solid #e11f2b;"></div>
<div class="r" style="left:535.2px;top:42.2px;width:132.4px;height:15px;background:#efefef;"></div>
<div class="r" style="left:535.5px;top:42.5px;width:32px;height:14.7px;background:#e2e2e2;"></div>
<div class="r" style="left:609.5px;top:42.5px;width:58px;height:14.7px;background:#e2e2e2;"></div>
<div class="r" style="left:567.5px;top:42.5px;width:42px;height:14.7px;background:#f0f0f0;"></div>
<div class="t" style="left:540.00px;top:48.01px;font-size:5.49px;color:#555;transform:scaleX(0.8929);transform-origin:left center;">STEPS (<i>3</i>)</div>
<div class="t" style="left:571.40px;top:48.05px;font-size:5.42px;color:#222;transform:scaleX(0.8929);transform-origin:left center;font-weight:bold;-webkit-text-stroke:0.22px currentColor;">VARIABLES (<i>1</i>)</div>
<div class="t" style="left:613.60px;top:48.02px;font-size:5.47px;color:#666;transform:scaleX(0.8929);transform-origin:left center;">ERRORS (<i>1</i>)</div>
<div class="t" style="left:537.30px;top:62.15px;font-size:5.60px;color:#9a9a9a;transform:scaleX(0.8929);transform-origin:left center;">Name</div>
<div class="t" style="left:604.20px;top:62.15px;font-size:5.60px;color:#9a9a9a;transform:scaleX(0.8929);transform-origin:left center;">Value</div>
<div class="r" style="left:535.2px;top:68.3px;width:132.4px;height:15.2px;background:#ffffff;"></div>
<div class="r" style="left:601px;top:68.3px;width:0.8px;height:15.2px;background:#e6e6e6;"></div>
<div class="r" style="left:655.4px;top:68.3px;width:12.2px;height:15.2px;background:#ececec;"></div>
<div class="t" style="left:540.40px;top:73.09px;font-size:6.81px;color:#1e1e1e;transform:scaleX(0.8929);transform-origin:left center;font-weight:bold;-webkit-text-stroke:0.22px currentColor;">Source</div>
<div class="t" style="left:604.80px;top:72.74px;font-size:6.72px;color:#1e1e1e;transform:scaleX(0.8929);transform-origin:left center;">9</div>
<div class="t" style="left:657.80px;top:72.02px;font-size:8.96px;color:#777;transform:scaleX(0.8929);transform-origin:left center;font-style:italic;font-family:"Liberation Serif",serif;">fx</div>
<div class="r" style="left:534px;top:156.8px;width:134.5px;height:1.5px;background:#fafafa;"></div>
<div class="r" style="left:534px;top:172.4px;width:134.5px;height:1.5px;background:#fafafa;"></div>
<div class="t" style="left:633.50px;top:160.83px;font-size:7.84px;color:#666;transform:scaleX(0.8929);transform-origin:left center;font-style:italic;font-family:"Liberation Serif",serif;">fx</div>
<svg style="left:644.8px;top:161px" width="8" height="8.5" viewBox="0 0 8 8.5"><path d="M0.5 0.5 H4.8 L7 2.7 V8 H0.5 Z" fill="#fbfbfb" stroke="#6a6a6a" stroke-width="0.8"/></svg>
<svg style="left:657.5px;top:161px" width="6.5" height="8.5" viewBox="0 0 6.5 8.5"><rect x="0" y="0" width="6.5" height="1.1" fill="#888"/><rect x="0.6" y="1.6" width="5.3" height="6.9" rx="0.6" fill="#9a9a9a"/><path d="M0.6 3.5 H5.9 M0.6 5.5 H5.9" stroke="#c8c8c8" stroke-width="0.5"/></svg>
<div class="t" style="left:540.30px;top:179.56px;font-size:5.40px;color:#333;transform:scaleX(0.8929);transform-origin:left center;font-weight:bold;-webkit-text-stroke:0.22px currentColor;">PROPERTIES</div>
<div class="t" style="left:622.00px;top:191.34px;font-size:4.94px;color:#666;transform:scaleX(0.7692);transform-origin:left center;">BASIC</div>
<div class="r" style="left:638.4px;top:187.8px;width:27.8px;height:10.3px;background:#d7d7d7;"></div>
<div class="t" style="left:641.00px;top:191.62px;font-size:4.37px;color:#555;transform:scaleX(0.8929);transform-origin:left center;">ADVANCED</div>
<div class="t" style="right:83.20px;text-align:right;top:208.85px;font-size:5.42px;color:#666;transform:scaleX(0.8929);transform-origin:right center;">Name</div>
<div class="r" style="left:591.6px;top:204.6px;width:76px;height:12.5px;background:#ffffff;"></div>
<div class="t" style="left:594.80px;top:207.46px;font-size:7.28px;color:#222;transform:scaleX(0.8197);transform-origin:left center;">Tip Box 1</div>
<div class="t" style="right:83.20px;text-align:right;top:225.14px;font-size:5.06px;color:#666;transform:scaleX(0.8929);transform-origin:right center;">Type</div>
<div class="r" style="left:591.6px;top:220.1px;width:76px;height:12.5px;background:#ffffff;"></div>
<div class="t" style="left:594.80px;top:223.42px;font-size:7.54px;color:#222;transform:scaleX(0.8197);transform-origin:left center;">125µL Tips (x96)</div>
<svg style="left:659.5px;top:225.5px" width="5" height="3.5" viewBox="0 0 5 3.5"><path d="M0 0 H5 L2.5 3.2 Z" fill="#111"/></svg>
<div class="t" style="right:83.20px;text-align:right;top:241.24px;font-size:5.43px;color:#666;transform:scaleX(0.8929);transform-origin:right center;">Available Columns</div>
<div class="r" style="left:591.6px;top:235.6px;width:64.7px;height:14.1px;background:#ffffff;"></div>
<div class="r" style="left:656.3px;top:235.6px;width:10.3px;height:14.1px;background:#f5f5f5;"></div>
<div class="r" style="left:595.8px;top:238.5px;width:26.2px;height:8.8px;border-radius:1.5px;background:#1a9dab;"></div>
<div class="t" style="left:599.20px;top:240.22px;font-size:6.38px;color:#ffffff;transform:scaleX(0.8929);transform-origin:left center;font-weight:bold;-webkit-text-stroke:0.22px currentColor;">Source</div>
<div class="t" style="left:658.30px;top:239.63px;font-size:7.84px;color:#777;transform:scaleX(0.8929);transform-origin:left center;font-style:italic;font-family:"Liberation Serif",serif;">fx</div>
<div class="t" style="right:83.20px;text-align:right;top:257.27px;font-size:5.57px;color:#8c8c8c;transform:scaleX(0.8929);transform-origin:right center;">Working Volume (µL)</div>
<div class="r" style="left:591.6px;top:253.3px;width:75px;height:11.3px;background:#e4e4e4;"></div>
<div class="t" style="left:595.20px;top:256.53px;font-size:7.34px;color:#9a9a9a;transform:scaleX(0.8197);transform-origin:left center;">125.00</div>
<div class="r" style="left:534px;top:273px;width:134.5px;height:1.2px;background:#fafafa;"></div>
<div class="t" style="left:540.40px;top:279.28px;font-size:4.26px;color:#444;transform:scaleX(0.8929);transform-origin:left center;font-weight:bold;-webkit-text-stroke:0.22px currentColor;">DECK LOCATION</div>
<div class="t" style="right:83.20px;text-align:right;top:292.77px;font-size:5.57px;color:#666;transform:scaleX(0.8929);transform-origin:right center;">Location</div>
<div class="r" style="left:591.6px;top:288.4px;width:75px;height:12.6px;background:#ffffff;"></div>
<div class="t" style="left:594.80px;top:291.24px;font-size:7.32px;color:#222;transform:scaleX(0.8197);transform-origin:left center;">L1</div>
<svg style="left:659.5px;top:293.3px" width="5" height="3.5" viewBox="0 0 5 3.5"><path d="M0 0 H5 L2.5 3.2 Z" fill="#111"/></svg>
<div class="r" style="left:534px;top:309px;width:134.5px;height:1.2px;background:#fafafa;"></div>
<div class="t" style="left:540.40px;top:315.81px;font-size:5.13px;color:#333;transform:scaleX(0.8929);transform-origin:left center;font-weight:bold;-webkit-text-stroke:0.22px currentColor;">BARCODES</div>
<div class="t" style="right:83.20px;text-align:right;top:328.67px;font-size:5.56px;color:#666;transform:scaleX(0.8929);transform-origin:right center;">Enable Prompt</div>
<div class="r" style="left:591.6px;top:326px;width:10.4px;height:10.5px;border-radius:1px;background:#ffffff;"></div>
<div class="t" style="left:10.50px;top:488.51px;font-size:6.60px;color:#6fa5ae;transform:scaleX(0.8929);transform-origin:left center;">Available Deck Locations</div>
<div class="t" style="left:82.00px;top:489.04px;font-size:6.72px;color:#f2f2f2;transform:scaleX(0.8929);transform-origin:left center;font-weight:bold;-webkit-text-stroke:0.22px currentColor;">41</div>
<div class="t" style="left:117.20px;top:488.56px;font-size:6.51px;color:#6fa5ae;transform:scaleX(0.8929);transform-origin:left center;">Labware Items</div>
<div class="t" style="left:161.00px;top:489.04px;font-size:6.72px;color:#f2f2f2;transform:scaleX(0.8929);transform-origin:left center;font-weight:bold;-webkit-text-stroke:0.22px currentColor;">2</div>
<div class="t" style="left:192.70px;top:488.46px;font-size:6.68px;color:#6fa5ae;transform:scaleX(0.8929);transform-origin:left center;">Required Tips</div>
<div class="t" style="left:235.40px;top:489.04px;font-size:6.72px;color:#f2f2f2;transform:scaleX(0.8929);transform-origin:left center;font-weight:bold;-webkit-text-stroke:0.22px currentColor;">72</div>
<div class="t" style="left:270.30px;top:488.63px;font-size:6.37px;color:#6fa5ae;transform:scaleX(0.8929);transform-origin:left center;">Reservoirs</div>
<div class="t" style="left:302.00px;top:488.36px;font-size:6.87px;color:#f2f2f2;transform:scaleX(0.8929);transform-origin:left center;font-weight:bold;-webkit-text-stroke:0.22px currentColor;">0 of 6</div>
<div class="t" style="left:346.00px;top:488.53px;font-size:6.56px;color:#6fa5ae;transform:scaleX(0.8929);transform-origin:left center;">Total Steps</div>
<div class="t" style="left:380.90px;top:489.04px;font-size:6.72px;color:#f2f2f2;transform:scaleX(0.8929);transform-origin:left center;font-weight:bold;-webkit-text-stroke:0.22px currentColor;">3</div>
<div class="t" style="left:412.50px;top:488.19px;font-size:7.18px;color:#6fa5ae;transform:scaleX(0.8929);transform-origin:left center;">Instrument</div>
<div class="r" style="left:447.3px;top:486.9px;width:8.2px;height:8.2px;border-radius:50%;background:#5ea3bd;"></div>
<div class="t" style="left:462.30px;top:488.24px;font-size:7.08px;color:#6fa5ae;transform:scaleX(0.8929);transform-origin:left center;">Door</div>
<div class="r" style="left:480.3px;top:486.9px;width:8.2px;height:8.2px;border-radius:50%;background:#5ea3bd;"></div>
<div class="t" style="left:500.30px;top:488.40px;font-size:6.80px;color:#6fa5ae;transform:scaleX(0.8929);transform-origin:left center;">Database</div>
<div class="t" style="left:530.60px;top:488.61px;font-size:6.41px;color:#f2f2f2;transform:scaleX(0.8929);transform-origin:left center;font-weight:bold;-webkit-text-stroke:0.22px currentColor;">Firefly Development 5</div>
<svg style="left:617.5px;top:487px" width="12" height="9" viewBox="0 0 12 9"><path d="M2.5 7.5 A2.2 2.2 0 0 1 2.8 3.2 A3.2 3.2 0 0 1 8.8 3 A2.3 2.3 0 0 1 9.3 7.5 Z" fill="none" stroke="#dfe8ea" stroke-width="0.9"/><circle cx="9.3" cy="7" r="1.8" fill="#5a8ee8"/></svg>
<svg style="left:662px;top:493px" width="7" height="7" viewBox="0 0 7 7"><path d="M6.5 0.5 L0.5 6.5 M6.5 3 L3 6.5" stroke="#6aa" stroke-width="0.6"/></svg>
</body></html>
